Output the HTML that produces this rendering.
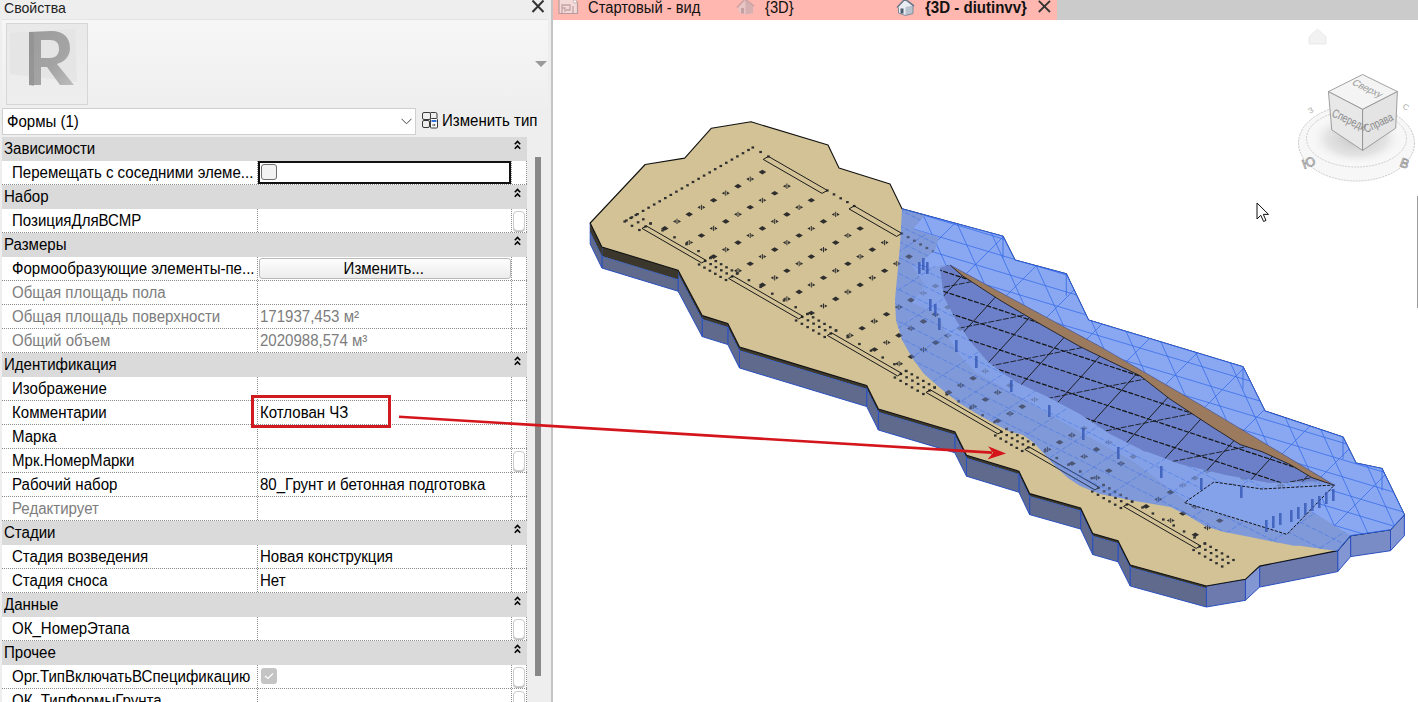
<!DOCTYPE html>
<html><head><meta charset="utf-8">
<style>
*{box-sizing:border-box;margin:0;padding:0}
html,body{width:1418px;height:702px;overflow:hidden;background:#fff;font-family:"Liberation Sans",sans-serif;font-size:16px;color:#000}
.sx{transform:scaleX(0.94);transform-origin:0 0}
#lp{position:absolute;left:0;top:0;width:551px;height:702px;background:#eeeeee}
#sep{position:absolute;left:551px;top:0;width:2px;height:702px;background:#c4c4c4}
.title{position:absolute;left:4px;top:-2px;font-size:15px;color:#222;line-height:20px}
.xcl{position:absolute;left:531px;top:0px;width:14px;height:13px}
#prev{position:absolute;left:2px;top:19px;width:546px;height:88px;background:linear-gradient(#f6f6f6,#efefef);border-top:1px solid #e4e4e4}
#ibox{position:absolute;left:6px;top:23px;width:82px;height:82px;border:1px solid #d6d6d6;background:#ececec}
.parr{position:absolute;left:535px;top:61px;width:0;height:0;border-left:6px solid transparent;border-right:6px solid transparent;border-top:6px solid #9a9a9a}
#dd{position:absolute;left:2px;top:108px;width:414px;height:27px;background:#fff;border:1px solid #cfcfcf}
#dd span{position:absolute;left:4px;top:4px;line-height:17px}
#ctype{position:absolute;left:442px;top:112px;line-height:17px}
.hd{position:absolute;left:2px;width:525px;height:24px;background:#dadada}
.ht{position:absolute;left:2px;top:3px;line-height:17px}
.chev{position:absolute;left:512px;top:3px;width:7px;height:10px}
.rw{position:absolute;left:2px;width:525px;height:24px;background:#fff}
.rw:after{content:"";position:absolute;left:0;right:0;bottom:0;height:1px;background:repeating-linear-gradient(90deg,#8c8c8c 0 1px,transparent 1px 2px)}
.vd{position:absolute;top:161px;width:1px;height:541px;background:repeating-linear-gradient(180deg,#8c8c8c 0 1px,transparent 1px 2px)}
.lt{position:absolute;left:10px;top:3px;line-height:17px;white-space:nowrap}
.vt{position:absolute;left:258px;top:3px;line-height:17px;white-space:nowrap}
.g .lt,.g .vt{color:#7d7d7d}
.focus{position:absolute;left:258px;width:253px;height:23px;border:2px solid #111}
.cb{position:absolute;left:261px;width:16px;height:16px;border:1px solid #6e6e6e;border-radius:3px;background:#f2f2f2}
.cb2{position:absolute;left:261px;width:16px;height:16px;border-radius:3px;background:#c4c4c4}
.cb2 svg{position:absolute;left:3px;top:4px}
.sbox{position:absolute;left:513px;width:12px;height:20px;border:1px solid #cdcdcd;border-radius:4px;background:#fff;box-shadow:0 1px 0 #bdbdbd}
.ebtn{position:absolute;left:259px;width:252px;height:21px;border:1px solid #b9b9b9;border-radius:3px;background:linear-gradient(#fdfdfd,#ececec);font-style:normal;text-align:center;line-height:19px;padding-right:3px}
#vline{position:absolute;left:513px;top:161px;width:1px;height:541px}
#sbthumb{position:absolute;left:535px;top:157px;width:6px;height:519px;background:#888}
#tabs{position:absolute;left:553px;top:0;width:865px;height:20px;background:#cbcbcb}
#tabpink{position:absolute;left:553px;top:0;width:504px;height:20px;background:#ffb7b0}
.tt{position:absolute;top:0;line-height:17px;white-space:nowrap;color:#111}
#canvas{position:absolute;left:553px;top:20px;width:865px;height:682px;background:#fff}
</style></head><body>
<div id="lp">
<div class="title sx">Свойства</div>
<svg class="xcl" viewBox="0 0 14 13"><path d="M1.5 0.5 L12.5 12 M12.5 0.5 L1.5 12" stroke="#333" stroke-width="2" fill="none"/></svg>
<div id="prev"></div>
<div id="ibox">
<svg width="80" height="80" viewBox="0 0 80 80" style="position:absolute;left:0;top:0">
<defs><linearGradient id="rg" x1="0" y1="0" x2="1" y2="1"><stop offset="0" stop-color="#9c9c9c"/><stop offset="0.6" stop-color="#a4a4a4"/><stop offset="1" stop-color="#bdbdbd"/></linearGradient>
<linearGradient id="bg2" x1="0" y1="0" x2="0" y2="1"><stop offset="0" stop-color="#e9e9e9"/><stop offset="1" stop-color="#eeeeee"/></linearGradient></defs>
<rect x="0" y="0" width="80" height="80" fill="url(#bg2)"/>
<path d="M3 9 L68 5 L70 58 L3 50 Z" fill="#e2e2e2" opacity="0.7"/>
<path d="M22 8 L44 7 C57 7 63 14 63 24 C63 33 57 38 50 40 L67 61 L53 61 L40 43 L34 43 L34 61 L22 61 Z M34 16 L34 34 L43 34 C49 34 52 30 52 25 C52 19 49 16 43 16 Z" fill="url(#rg)" fill-rule="evenodd"/>
<path d="M22 8 L22 61 L27 62 L27 9 Z" fill="#8e8e8e" opacity="0.6"/>
</svg>
</div>
<i class="parr"></i>
<div id="dd"><span class="sx">Формы (1)</span>
<svg style="position:absolute;left:398px;top:9px" width="11" height="7" viewBox="0 0 11 7"><path d="M0.5 0.8 L5.5 5.8 L10.5 0.8" stroke="#444" stroke-width="1" fill="none"/></svg></div>
<svg style="position:absolute;left:421px;top:111px" width="18" height="18" viewBox="0 0 18 18"><g fill="none" stroke="#3a3a3a" stroke-width="1"><rect x="1.5" y="1.5" width="8" height="7" rx="1.5"/><rect x="1.5" y="9.5" width="7" height="7" rx="1.5"/><path d="M9.5 1.5 h5 a1.5 1.5 0 0 1 1.5 1.5 v4"/><rect x="9.5" y="7.5" width="7" height="9.5" rx="1" fill="#fff"/></g><rect x="10.5" y="9" width="5" height="2" fill="#2f6fd6"/><path d="M11 14h3M13 12.8l1.2 1.2-1.2 1.2" stroke="#3a3a3a" stroke-width="0.8" fill="none"/></svg>
<div id="ctype" class="sx" style="position:absolute">Изменить тип</div>
<div class="rw" style="top:161px"><span class="lt sx">Перемещать с соседними элеме...</span><span class="vt sx"></span></div>
<div class="rw" style="top:209px"><span class="lt sx">ПозицияДляВСМР</span><span class="vt sx"></span></div>
<div class="rw" style="top:257px"><span class="lt sx">Формообразующие элементы-пе...</span><span class="vt sx"></span></div>
<div class="rw g" style="top:281px"><span class="lt sx">Общая площадь пола</span><span class="vt sx"></span></div>
<div class="rw g" style="top:305px"><span class="lt sx">Общая площадь поверхности</span><span class="vt sx">171937,453 м²</span></div>
<div class="rw g" style="top:329px"><span class="lt sx">Общий объем</span><span class="vt sx">2020988,574 м³</span></div>
<div class="rw" style="top:377px"><span class="lt sx">Изображение</span><span class="vt sx"></span></div>
<div class="rw" style="top:401px"><span class="lt sx">Комментарии</span><span class="vt sx">Котлован ЧЗ</span></div>
<div class="rw" style="top:425px"><span class="lt sx">Марка</span><span class="vt sx"></span></div>
<div class="rw" style="top:449px"><span class="lt sx">Мрк.НомерМарки</span><span class="vt sx"></span></div>
<div class="rw" style="top:473px"><span class="lt sx">Рабочий набор</span><span class="vt sx">80_Грунт и бетонная подготовка</span></div>
<div class="rw g" style="top:497px"><span class="lt sx">Редактирует</span><span class="vt sx"></span></div>
<div class="rw" style="top:545px"><span class="lt sx">Стадия возведения</span><span class="vt sx">Новая конструкция</span></div>
<div class="rw" style="top:569px"><span class="lt sx">Стадия сноса</span><span class="vt sx">Нет</span></div>
<div class="rw" style="top:617px"><span class="lt sx">ОК_НомерЭтапа</span><span class="vt sx"></span></div>
<div class="rw" style="top:665px"><span class="lt sx">Орг.ТипВключатьВСпецификацию</span><span class="vt sx"></span></div>
<div class="rw" style="top:689px"><span class="lt sx">ОК_ТипФормыГрунта</span><span class="vt sx"></span></div>
<i class="vd" style="left:257px"></i><i class="vd" style="left:511px"></i><i class="vd" style="left:526px"></i>
<div class="hd" style="top:137px"><span class="ht sx">Зависимости</span><svg class="chev" viewBox="0 0 7 10"><path d="M0.8 4.2 L3.5 1.5 L6.2 4.2 M0.8 8.7 L3.5 6 L6.2 8.7" stroke="#000" stroke-width="1.6" fill="none"/></svg></div>
<div class="hd" style="top:185px"><span class="ht sx">Набор</span><svg class="chev" viewBox="0 0 7 10"><path d="M0.8 4.2 L3.5 1.5 L6.2 4.2 M0.8 8.7 L3.5 6 L6.2 8.7" stroke="#000" stroke-width="1.6" fill="none"/></svg></div>
<div class="hd" style="top:233px"><span class="ht sx">Размеры</span><svg class="chev" viewBox="0 0 7 10"><path d="M0.8 4.2 L3.5 1.5 L6.2 4.2 M0.8 8.7 L3.5 6 L6.2 8.7" stroke="#000" stroke-width="1.6" fill="none"/></svg></div>
<div class="hd" style="top:353px"><span class="ht sx">Идентификация</span><svg class="chev" viewBox="0 0 7 10"><path d="M0.8 4.2 L3.5 1.5 L6.2 4.2 M0.8 8.7 L3.5 6 L6.2 8.7" stroke="#000" stroke-width="1.6" fill="none"/></svg></div>
<div class="hd" style="top:521px"><span class="ht sx">Стадии</span><svg class="chev" viewBox="0 0 7 10"><path d="M0.8 4.2 L3.5 1.5 L6.2 4.2 M0.8 8.7 L3.5 6 L6.2 8.7" stroke="#000" stroke-width="1.6" fill="none"/></svg></div>
<div class="hd" style="top:593px"><span class="ht sx">Данные</span><svg class="chev" viewBox="0 0 7 10"><path d="M0.8 4.2 L3.5 1.5 L6.2 4.2 M0.8 8.7 L3.5 6 L6.2 8.7" stroke="#000" stroke-width="1.6" fill="none"/></svg></div>
<div class="hd" style="top:641px"><span class="ht sx">Прочее</span><svg class="chev" viewBox="0 0 7 10"><path d="M0.8 4.2 L3.5 1.5 L6.2 4.2 M0.8 8.7 L3.5 6 L6.2 8.7" stroke="#000" stroke-width="1.6" fill="none"/></svg></div>
<i class="focus" style="top:161px"></i><i class="cb" style="top:164px"></i>
<i class="sbox" style="top:211px"></i>
<i class="ebtn" style="top:258px"><span style="display:inline-block;transform:scaleX(0.94)">Изменить...</span></i>






<i class="sbox" style="top:451px"></i>




<i class="sbox" style="top:619px"></i>
<i class="cb2" style="top:668px"><svg width="10" height="8" viewBox="0 0 10 8"><path d="M1 4 L4 6.5 L9 1.5" stroke="#fff" stroke-width="1.2" fill="none"/></svg></i><i class="sbox" style="top:667px"></i>
<i class="sbox" style="top:691px"></i>
<div id="sbthumb"></div>
</div>
<div id="sep"></div>
<div id="tabs"></div><div id="tabpink"></div>
<svg style="position:absolute;left:558px;top:0" width="21" height="15" viewBox="0 0 21 15">
<path d="M1 -1 V13.5 H19.5 V3 L16.5 -1" fill="#f3d9d8" stroke="#b99a9a" stroke-width="1.2"/>
<path d="M4 13 V5 H12 V10 H8 M4 8 H7 V12 M15 6 V13" fill="none" stroke="#c2a3a3" stroke-width="1.3"/>
<circle cx="17" cy="1.5" r="1.6" fill="#fff" stroke="#c2a3a3" stroke-width="0.8"/>
</svg>
<div class="tt sx" style="left:588px;top:-1px;transform:scaleX(0.92)">Стартовый - вид</div>
<svg style="position:absolute;left:736px;top:0" width="19" height="15" viewBox="0 0 19 15">
<path d="M2.5 7 L9 -0.5 L17 5.5 V13 L9.5 14.5 L2.5 12.5 Z" fill="#e8c4c4"/>
<path d="M9 -0.5 L17 5.5 V13 L9.5 14.5 V7 Z" fill="#d6b0b0"/>
<path d="M1 7.5 L9 -1 L18 6" fill="none" stroke="#c9a1a1" stroke-width="1.4"/>
<rect x="5" y="8" width="3" height="5.5" fill="#c5a0a0"/>
</svg>
<div class="tt sx" style="left:765px;top:-1px;transform:scaleX(0.92)">{3D}</div>
<svg style="position:absolute;left:896px;top:0" width="19" height="16" viewBox="0 0 19 16">
<path d="M2.5 7 L9 -0.5 L17 5.5 V13.5 L9.5 15.5 L2.5 13 Z" fill="#e9edf3"/>
<path d="M9.5 7 L17 5.5 V13.5 L9.5 15.5 Z" fill="#b9c2cf"/>
<path d="M1 7.5 L9 -1 L18 6" fill="none" stroke="#6d7a8c" stroke-width="1.6"/>
<path d="M2.5 7.5 V13 L9.5 15.5 L17 13.5 V6" fill="none" stroke="#7f8a99" stroke-width="1"/>
<rect x="4.5" y="8.5" width="3" height="5" fill="#4f5d70"/>
</svg>
<div class="tt sx" style="left:925px;top:-1px;font-weight:bold">{3D - diutinvv}</div>
<svg style="position:absolute;left:1038px;top:0" width="13" height="13" viewBox="0 0 13 13"><path d="M0.8 0.8 L12 12 M12 0.8 L0.8 12" stroke="#333" stroke-width="1.8"/></svg>
<svg style="position:absolute;left:1290px;top:20px" width="128" height="200" viewBox="1290 20 128 200">
<defs>
<radialGradient id="shd" cx="0.5" cy="0.5" r="0.5"><stop offset="0" stop-color="#c8c8c8"/><stop offset="0.6" stop-color="#e4e4e4"/><stop offset="1" stop-color="#fff" stop-opacity="0"/></radialGradient>
</defs>
<path d="M1309 37 L1317.5 29 L1326 37 V44 H1309 Z" fill="#f2f2f2" stroke="#e6e6e6" stroke-width="0.8"/>
<ellipse cx="1356.5" cy="143" rx="58" ry="38" fill="#f7f7f7" stroke="#c8c8c8" stroke-width="1" stroke-dasharray="2 1"/>
<ellipse cx="1356.5" cy="138.5" rx="50" ry="28.5" fill="url(#shd)" stroke="#cfcfcf" stroke-width="1" stroke-dasharray="2 1"/>
<path d="M1300.5 143.5 A56 36.5 0 0 0 1412.5 143.5 A56 36.5 0 0 1 1300.5 143.5" fill="none"/>

<polygon points="1328.4,91.6 1362.6,74.5 1397.4,91.6 1362.6,109.4" fill="#f4f4f4" stroke="#8a8a8a" stroke-width="0.8"/>
<polygon points="1328.4,91.6 1362.6,109.4 1362.6,150.4 1331.8,129.9" fill="#e8e8e8" stroke="#8a8a8a" stroke-width="0.8"/>
<polygon points="1362.6,109.4 1397.4,91.6 1395.7,128.2 1362.6,150.4" fill="#e4e4e4" stroke="#8a8a8a" stroke-width="0.8"/>
<text x="0" y="0" font-family="Liberation Sans" font-size="9.5" fill="#9a9a9a" transform="translate(1351,84) rotate(26) skewX(-20)">Сверху</text>
<text x="0" y="0" font-family="Liberation Sans" font-size="10" fill="#8a8a8a" transform="translate(1331,116) rotate(25) scale(0.9,1.2)">Спереди</text>
<text x="0" y="0" font-family="Liberation Sans" font-size="10" fill="#8a8a8a" transform="translate(1366,133) rotate(-25) scale(0.9,1.2)">Справа</text>
<text x="0" y="0" font-family="Liberation Sans" font-size="13" fill="none" stroke="#999" stroke-width="0.8" transform="translate(1304,169) rotate(-20)">Ю</text>
<text x="0" y="0" font-family="Liberation Sans" font-size="13" fill="none" stroke="#999" stroke-width="0.8" transform="translate(1399,166) rotate(20)">В</text>
<text x="0" y="0" font-family="Liberation Sans" font-size="8" fill="#aaa" transform="translate(1310,114) rotate(-30)">З</text>
<text x="0" y="0" font-family="Liberation Sans" font-size="8" fill="#aaa" transform="translate(1402,108) rotate(30)">С</text>
</svg>
<svg style="position:absolute;left:1256px;top:202px" width="14" height="21" viewBox="0 0 14 21"><path d="M1 1 V17 L4.8 13.3 L7.6 19.5 L10 18.4 L7.3 12.4 H12.5 Z" fill="#fff" stroke="#111" stroke-width="1"/></svg>
<div style="position:absolute;left:1417px;top:196px;width:1px;height:112px;background:#9c9c9c"></div>
<svg id="model" width="1418" height="702" viewBox="0 0 1418 702" style="position:absolute;left:0;top:0">
<polygon points="1404.4,514.7 1390.5,529.7 1390.5,550.7 1404.4,535.7" fill="#8196d2" stroke="#2a4fc0" stroke-width="1"/>
<polygon points="1390.5,529.7 1350.6,535.6 1350.6,556.6 1390.5,550.7" fill="#7a8cc6" stroke="#2a4fc0" stroke-width="1"/>
<polygon points="1350.6,535.6 1337.7,550.6 1337.7,571.6 1350.6,556.6" fill="#8196d2" stroke="#2a4fc0" stroke-width="1"/>
<polygon points="1337.7,550.6 1259.6,566.1 1259.6,587.1 1337.7,571.6" fill="#6c7aae" stroke="#2a4fc0" stroke-width="1"/>
<polygon points="1259.6,566.1 1245.4,579.3 1245.4,600.3 1259.6,587.1" fill="#8196d2" stroke="#2a4fc0" stroke-width="1"/>
<polygon points="1245.4,579.3 1206.4,586.0 1206.4,607.0 1245.4,600.3" fill="#6c7aae" stroke="#2a4fc0" stroke-width="1"/>
<polygon points="1206.4,586.0 1130.2,565.0 1130.2,586.0 1206.4,607.0" fill="#5f6a8c" stroke="#2a4fc0" stroke-width="1"/>
<polygon points="1206.4,586.0 1130.2,565.0 1130.2,567.1 1206.4,588.1" fill="#3c372c"/>
<line x1="1206.4" y1="588.6" x2="1130.2" y2="567.6" stroke="#3566dc" stroke-width="1" stroke-dasharray="2 1.5"/>
<polygon points="1130.2,565.0 1118.0,540.8 1118.0,561.8 1130.2,586.0" fill="#5f6a8c" stroke="#2a4fc0" stroke-width="1"/>
<polygon points="1130.2,565.0 1118.0,540.8 1118.0,543.1 1130.2,567.3" fill="#3c372c"/>
<line x1="1130.2" y1="567.8" x2="1118" y2="543.6" stroke="#3566dc" stroke-width="1" stroke-dasharray="2 1.5"/>
<polygon points="1118.0,540.8 1092.7,533.5 1092.7,554.5 1118.0,561.8" fill="#5f6a8c" stroke="#2a4fc0" stroke-width="1"/>
<polygon points="1118.0,540.8 1092.7,533.5 1092.7,535.8 1118.0,543.1" fill="#3c372c"/>
<line x1="1118" y1="543.6" x2="1092.7" y2="536.3" stroke="#3566dc" stroke-width="1" stroke-dasharray="2 1.5"/>
<polygon points="1092.7,533.5 1080.6,508.0 1080.6,529.0 1092.7,554.5" fill="#5f6a8c" stroke="#2a4fc0" stroke-width="1"/>
<polygon points="1092.7,533.5 1080.6,508.0 1080.6,510.4 1092.7,535.9" fill="#3c372c"/>
<line x1="1092.7" y1="536.4" x2="1080.6" y2="510.9" stroke="#3566dc" stroke-width="1" stroke-dasharray="2 1.5"/>
<polygon points="1080.6,508.0 1029.6,493.6 1029.6,514.6 1080.6,529.0" fill="#5f6a8c" stroke="#2a4fc0" stroke-width="1"/>
<polygon points="1080.6,508.0 1029.6,493.6 1029.6,496.1 1080.6,510.5" fill="#3c372c"/>
<line x1="1080.6" y1="511.0" x2="1029.6" y2="496.6" stroke="#3566dc" stroke-width="1" stroke-dasharray="2 1.5"/>
<polygon points="1029.6,493.6 1018.9,471.2 1018.9,492.2 1029.6,514.6" fill="#5f6a8c" stroke="#2a4fc0" stroke-width="1"/>
<polygon points="1029.6,493.6 1018.9,471.2 1018.9,473.8 1029.6,496.2" fill="#3c372c"/>
<line x1="1029.6" y1="496.7" x2="1018.9" y2="474.3" stroke="#3566dc" stroke-width="1" stroke-dasharray="2 1.5"/>
<polygon points="1018.9,471.2 966.5,455.2 966.5,476.2 1018.9,492.2" fill="#5f6a8c" stroke="#2a4fc0" stroke-width="1"/>
<polygon points="1018.9,471.2 966.5,455.2 966.5,457.9 1018.9,473.9" fill="#3c372c"/>
<line x1="1018.9" y1="474.4" x2="966.5" y2="458.4" stroke="#3566dc" stroke-width="1" stroke-dasharray="2 1.5"/>
<polygon points="966.5,455.2 954.8,431.7 954.8,452.7 966.5,476.2" fill="#5f6a8c" stroke="#2a4fc0" stroke-width="1"/>
<polygon points="966.5,455.2 954.8,431.7 954.8,434.5 966.5,458.0" fill="#3c372c"/>
<line x1="966.5" y1="458.5" x2="954.8" y2="435.0" stroke="#3566dc" stroke-width="1" stroke-dasharray="2 1.5"/>
<polygon points="954.8,431.7 878.4,409.0 878.4,430.0 954.8,452.7" fill="#5f6a8c" stroke="#2a4fc0" stroke-width="1"/>
<polygon points="954.8,431.7 878.4,409.0 878.4,411.9 954.8,434.6" fill="#3c372c"/>
<line x1="954.8" y1="435.1" x2="878.4" y2="412.4" stroke="#3566dc" stroke-width="1" stroke-dasharray="2 1.5"/>
<polygon points="878.4,409.0 866.7,385.5 866.7,406.5 878.4,430.0" fill="#5f6a8c" stroke="#2a4fc0" stroke-width="1"/>
<polygon points="878.4,409.0 866.7,385.5 866.7,388.5 878.4,412.0" fill="#3c372c"/>
<line x1="878.4" y1="412.5" x2="866.7" y2="389.0" stroke="#3566dc" stroke-width="1" stroke-dasharray="2 1.5"/>
<polygon points="866.7,385.5 739.5,347.0 739.5,368.0 866.7,406.5" fill="#5f6a8c" stroke="#2a4fc0" stroke-width="1"/>
<polygon points="866.7,385.5 739.5,347.0 739.5,350.2 866.7,388.7" fill="#3c372c"/>
<line x1="866.7" y1="389.2" x2="739.5" y2="350.7" stroke="#3566dc" stroke-width="1" stroke-dasharray="2 1.5"/>
<polygon points="739.5,347.0 727.8,323.5 727.8,344.5 739.5,368.0" fill="#5f6a8c" stroke="#2a4fc0" stroke-width="1"/>
<polygon points="739.5,347.0 727.8,323.5 727.8,327.0 739.5,350.5" fill="#3c372c"/>
<line x1="739.5" y1="351.0" x2="727.8" y2="327.5" stroke="#3566dc" stroke-width="1" stroke-dasharray="2 1.5"/>
<polygon points="727.8,323.5 702.2,315.6 702.2,336.6 727.8,344.5" fill="#5f6a8c" stroke="#2a4fc0" stroke-width="1"/>
<polygon points="727.8,323.5 702.2,315.6 702.2,319.1 727.8,327.0" fill="#3c372c"/>
<line x1="727.8" y1="327.5" x2="702.2" y2="319.6" stroke="#3566dc" stroke-width="1" stroke-dasharray="2 1.5"/>
<polygon points="702.2,315.6 678.1,270.2 678.1,291.2 702.2,336.6" fill="#5f6a8c" stroke="#2a4fc0" stroke-width="1"/>
<polygon points="702.2,315.6 678.1,270.2 678.1,273.8 702.2,319.2" fill="#3c372c"/>
<line x1="702.2" y1="319.7" x2="678.1" y2="274.3" stroke="#3566dc" stroke-width="1" stroke-dasharray="2 1.5"/>
<polygon points="678.1,270.2 601.9,247.0 601.9,268.0 678.1,291.2" fill="#5f6a8c" stroke="#2a4fc0" stroke-width="1"/>
<polygon points="678.1,270.2 601.9,247.0 601.9,256.0 678.1,279.2" fill="#3c372c"/>
<line x1="678.1" y1="279.7" x2="601.9" y2="256.5" stroke="#3566dc" stroke-width="1" stroke-dasharray="2 1.5"/>
<polygon points="601.9,247.0 590.2,223.0 590.2,244.0 601.9,268.0" fill="#5f6a8c" stroke="#2a4fc0" stroke-width="1"/>
<polygon points="601.9,247.0 590.2,223.0 590.2,232.0 601.9,256.0" fill="#3c372c"/>
<line x1="601.9" y1="256.5" x2="590.2" y2="232.5" stroke="#3566dc" stroke-width="1" stroke-dasharray="2 1.5"/>
<polygon points="590.2,223.0 645.2,164.5 684.7,158.1 711.4,128.2 751.0,121.8 828.0,145.0 839.0,168.0 890.0,184.0 902.0,208.8 1003.0,236.2 1015.0,260.0 1066.3,273.8 1088.5,320.0 1243.0,366.7 1265.0,411.0 1343.0,437.0 1356.0,463.0 1382.0,468.5 1404.4,514.7 1390.5,529.7 1350.6,535.6 1337.7,550.6 1259.6,566.1 1245.4,579.3 1206.4,586.0 1130.2,565.0 1118.0,540.8 1092.7,533.5 1080.6,508.0 1029.6,493.6 1018.9,471.2 966.5,455.2 954.8,431.7 878.4,409.0 866.7,385.5 739.5,347.0 727.8,323.5 702.2,315.6 678.1,270.2 601.9,247.0 590.2,223.0" fill="#d2c295" stroke="#111" stroke-width="1.1" stroke-linejoin="round"/>
<g fill="#2e2e2e"><rect x="625.1" y="219.4" width="2.6" height="2.2"/><rect x="630.7" y="216.2" width="2.6" height="2.2"/><rect x="636.2" y="213.0" width="2.6" height="2.2"/><rect x="641.8" y="209.8" width="2.6" height="2.2"/><rect x="647.3" y="206.6" width="2.6" height="2.2"/><rect x="652.9" y="203.4" width="2.6" height="2.2"/><rect x="658.4" y="200.2" width="2.6" height="2.2"/><rect x="664.0" y="197.0" width="2.6" height="2.2"/><rect x="669.5" y="193.8" width="2.6" height="2.2"/><rect x="675.1" y="190.6" width="2.6" height="2.2"/><rect x="680.6" y="187.4" width="2.6" height="2.2"/><rect x="686.2" y="184.2" width="2.6" height="2.2"/><rect x="691.7" y="180.9" width="2.6" height="2.2"/><rect x="697.3" y="177.7" width="2.6" height="2.2"/><rect x="702.8" y="174.5" width="2.6" height="2.2"/><rect x="708.4" y="171.3" width="2.6" height="2.2"/><rect x="713.9" y="168.1" width="2.6" height="2.2"/><rect x="719.5" y="164.9" width="2.6" height="2.2"/><rect x="725.0" y="161.7" width="2.6" height="2.2"/><rect x="730.6" y="158.5" width="2.6" height="2.2"/><rect x="736.1" y="155.3" width="2.6" height="2.2"/><rect x="741.7" y="152.1" width="2.6" height="2.2"/><rect x="747.2" y="148.9" width="2.6" height="2.2"/><rect x="751.5" y="146.4" width="2.6" height="2.2"/><rect x="759.3" y="150.9" width="2.6" height="2.2"/><rect x="767.1" y="155.4" width="2.6" height="2.2"/><rect x="826.0" y="189.4" width="2.6" height="2.2"/><rect x="832.7" y="193.3" width="2.6" height="2.2"/><rect x="839.4" y="197.2" width="2.6" height="2.2"/><rect x="846.1" y="201.0" width="2.6" height="2.2"/><rect x="852.9" y="204.9" width="2.6" height="2.2"/><rect x="900.5" y="232.4" width="2.6" height="2.2"/><rect x="906.8" y="236.0" width="2.6" height="2.2"/><rect x="913.0" y="239.7" width="2.6" height="2.2"/><rect x="919.3" y="243.3" width="2.6" height="2.2"/><rect x="925.6" y="246.9" width="2.6" height="2.2"/><rect x="931.9" y="250.5" width="2.6" height="2.2"/><rect x="938.2" y="254.2" width="2.6" height="2.2"/><rect x="944.4" y="257.8" width="2.6" height="2.2"/><rect x="950.7" y="261.4" width="2.6" height="2.2"/><rect x="1002.7" y="291.4" width="2.6" height="2.2"/><rect x="1009.5" y="295.3" width="2.6" height="2.2"/><rect x="1016.3" y="299.3" width="2.6" height="2.2"/><rect x="1023.1" y="303.2" width="2.6" height="2.2"/><rect x="1029.9" y="307.1" width="2.6" height="2.2"/><rect x="1036.7" y="311.0" width="2.6" height="2.2"/><rect x="1043.5" y="315.0" width="2.6" height="2.2"/><rect x="1050.3" y="318.9" width="2.6" height="2.2"/><rect x="1097.9" y="346.4" width="2.6" height="2.2"/><rect x="1104.3" y="350.1" width="2.6" height="2.2"/><rect x="1110.7" y="353.8" width="2.6" height="2.2"/><rect x="1117.1" y="357.5" width="2.6" height="2.2"/><rect x="1123.5" y="361.1" width="2.6" height="2.2"/><rect x="1129.9" y="364.8" width="2.6" height="2.2"/><rect x="1136.3" y="368.5" width="2.6" height="2.2"/><rect x="1142.6" y="372.2" width="2.6" height="2.2"/><rect x="1149.0" y="375.9" width="2.6" height="2.2"/><rect x="1197.5" y="403.9" width="2.6" height="2.2"/><rect x="1203.8" y="407.5" width="2.6" height="2.2"/><rect x="1210.1" y="411.1" width="2.6" height="2.2"/><rect x="1216.4" y="414.8" width="2.6" height="2.2"/><rect x="1222.6" y="418.4" width="2.6" height="2.2"/><rect x="1228.9" y="422.0" width="2.6" height="2.2"/><rect x="1235.2" y="425.6" width="2.6" height="2.2"/><rect x="1241.5" y="429.3" width="2.6" height="2.2"/><rect x="1247.8" y="432.9" width="2.6" height="2.2"/><rect x="1295.4" y="460.4" width="2.6" height="2.2"/><rect x="1302.1" y="464.3" width="2.6" height="2.2"/><rect x="1308.8" y="468.1" width="2.6" height="2.2"/><rect x="1315.5" y="472.0" width="2.6" height="2.2"/><rect x="1322.2" y="475.9" width="2.6" height="2.2"/><rect x="1328.9" y="479.8" width="2.6" height="2.2"/><rect x="1335.7" y="483.6" width="2.6" height="2.2"/><rect x="1342.4" y="487.5" width="2.6" height="2.2"/><rect x="1349.1" y="491.4" width="2.6" height="2.2"/><rect x="623.4" y="220.4" width="2.6" height="2.2"/><rect x="630.7" y="224.7" width="2.6" height="2.2"/><rect x="638.1" y="228.9" width="2.6" height="2.2"/><rect x="629.4" y="216.9" width="2.6" height="2.2"/><rect x="636.8" y="221.2" width="2.6" height="2.2"/><rect x="644.2" y="225.4" width="2.6" height="2.2"/><rect x="634.6" y="213.9" width="2.6" height="2.2"/><rect x="642.0" y="218.2" width="2.6" height="2.2"/><rect x="649.3" y="222.4" width="2.6" height="2.2"/><rect x="697.8" y="263.4" width="2.6" height="2.2"/><rect x="703.2" y="266.5" width="2.6" height="2.2"/><rect x="708.6" y="269.6" width="2.6" height="2.2"/><rect x="714.0" y="272.7" width="2.6" height="2.2"/><rect x="719.3" y="275.8" width="2.6" height="2.2"/><rect x="724.7" y="278.9" width="2.6" height="2.2"/><rect x="703.9" y="259.9" width="2.6" height="2.2"/><rect x="709.3" y="263.0" width="2.6" height="2.2"/><rect x="714.6" y="266.1" width="2.6" height="2.2"/><rect x="720.0" y="269.2" width="2.6" height="2.2"/><rect x="725.4" y="272.3" width="2.6" height="2.2"/><rect x="730.8" y="275.4" width="2.6" height="2.2"/><rect x="709.1" y="256.9" width="2.6" height="2.2"/><rect x="714.5" y="260.0" width="2.6" height="2.2"/><rect x="719.8" y="263.1" width="2.6" height="2.2"/><rect x="725.2" y="266.2" width="2.6" height="2.2"/><rect x="730.6" y="269.3" width="2.6" height="2.2"/><rect x="735.9" y="272.4" width="2.6" height="2.2"/><rect x="794.8" y="319.4" width="2.6" height="2.2"/><rect x="800.6" y="322.7" width="2.6" height="2.2"/><rect x="806.3" y="326.0" width="2.6" height="2.2"/><rect x="812.0" y="329.3" width="2.6" height="2.2"/><rect x="817.7" y="332.6" width="2.6" height="2.2"/><rect x="823.4" y="335.9" width="2.6" height="2.2"/><rect x="800.9" y="315.9" width="2.6" height="2.2"/><rect x="806.6" y="319.2" width="2.6" height="2.2"/><rect x="812.3" y="322.5" width="2.6" height="2.2"/><rect x="818.0" y="325.8" width="2.6" height="2.2"/><rect x="823.8" y="329.1" width="2.6" height="2.2"/><rect x="829.5" y="332.4" width="2.6" height="2.2"/><rect x="806.1" y="312.9" width="2.6" height="2.2"/><rect x="811.8" y="316.2" width="2.6" height="2.2"/><rect x="817.5" y="319.5" width="2.6" height="2.2"/><rect x="823.2" y="322.8" width="2.6" height="2.2"/><rect x="829.0" y="326.1" width="2.6" height="2.2"/><rect x="834.7" y="329.4" width="2.6" height="2.2"/><rect x="893.6" y="376.4" width="2.6" height="2.2"/><rect x="899.3" y="379.7" width="2.6" height="2.2"/><rect x="905.0" y="383.0" width="2.6" height="2.2"/><rect x="910.7" y="386.3" width="2.6" height="2.2"/><rect x="916.4" y="389.6" width="2.6" height="2.2"/><rect x="922.1" y="392.9" width="2.6" height="2.2"/><rect x="899.6" y="372.9" width="2.6" height="2.2"/><rect x="905.3" y="376.2" width="2.6" height="2.2"/><rect x="911.1" y="379.5" width="2.6" height="2.2"/><rect x="916.8" y="382.8" width="2.6" height="2.2"/><rect x="922.5" y="386.1" width="2.6" height="2.2"/><rect x="928.2" y="389.4" width="2.6" height="2.2"/><rect x="904.8" y="369.9" width="2.6" height="2.2"/><rect x="910.5" y="373.2" width="2.6" height="2.2"/><rect x="916.2" y="376.5" width="2.6" height="2.2"/><rect x="922.0" y="379.8" width="2.6" height="2.2"/><rect x="927.7" y="383.1" width="2.6" height="2.2"/><rect x="933.4" y="386.4" width="2.6" height="2.2"/><rect x="994.0" y="434.4" width="2.6" height="2.2"/><rect x="999.4" y="437.5" width="2.6" height="2.2"/><rect x="1004.8" y="440.6" width="2.6" height="2.2"/><rect x="1010.1" y="443.7" width="2.6" height="2.2"/><rect x="1015.5" y="446.8" width="2.6" height="2.2"/><rect x="1020.9" y="449.9" width="2.6" height="2.2"/><rect x="1000.1" y="430.9" width="2.6" height="2.2"/><rect x="1005.4" y="434.0" width="2.6" height="2.2"/><rect x="1010.8" y="437.1" width="2.6" height="2.2"/><rect x="1016.2" y="440.2" width="2.6" height="2.2"/><rect x="1021.6" y="443.3" width="2.6" height="2.2"/><rect x="1026.9" y="446.4" width="2.6" height="2.2"/><rect x="1005.3" y="427.9" width="2.6" height="2.2"/><rect x="1010.6" y="431.0" width="2.6" height="2.2"/><rect x="1016.0" y="434.1" width="2.6" height="2.2"/><rect x="1021.4" y="437.2" width="2.6" height="2.2"/><rect x="1026.8" y="440.3" width="2.6" height="2.2"/><rect x="1032.1" y="443.4" width="2.6" height="2.2"/><rect x="1091.0" y="490.4" width="2.6" height="2.2"/><rect x="1096.7" y="493.7" width="2.6" height="2.2"/><rect x="1102.4" y="497.0" width="2.6" height="2.2"/><rect x="1108.2" y="500.3" width="2.6" height="2.2"/><rect x="1113.9" y="503.6" width="2.6" height="2.2"/><rect x="1119.6" y="506.9" width="2.6" height="2.2"/><rect x="1097.1" y="486.9" width="2.6" height="2.2"/><rect x="1102.8" y="490.2" width="2.6" height="2.2"/><rect x="1108.5" y="493.5" width="2.6" height="2.2"/><rect x="1114.2" y="496.8" width="2.6" height="2.2"/><rect x="1119.9" y="500.1" width="2.6" height="2.2"/><rect x="1125.6" y="503.4" width="2.6" height="2.2"/><rect x="1102.3" y="483.9" width="2.6" height="2.2"/><rect x="1108.0" y="487.2" width="2.6" height="2.2"/><rect x="1113.7" y="490.5" width="2.6" height="2.2"/><rect x="1119.4" y="493.8" width="2.6" height="2.2"/><rect x="1125.1" y="497.1" width="2.6" height="2.2"/><rect x="1130.8" y="500.4" width="2.6" height="2.2"/><rect x="1192.3" y="548.9" width="2.6" height="2.2"/><rect x="1198.0" y="552.2" width="2.6" height="2.2"/><rect x="1203.8" y="555.5" width="2.6" height="2.2"/><rect x="1209.5" y="558.8" width="2.6" height="2.2"/><rect x="1215.2" y="562.1" width="2.6" height="2.2"/><rect x="1220.9" y="565.4" width="2.6" height="2.2"/><rect x="1198.4" y="545.4" width="2.6" height="2.2"/><rect x="1204.1" y="548.7" width="2.6" height="2.2"/><rect x="1209.8" y="552.0" width="2.6" height="2.2"/><rect x="1215.5" y="555.3" width="2.6" height="2.2"/><rect x="1221.3" y="558.6" width="2.6" height="2.2"/><rect x="1227.0" y="561.9" width="2.6" height="2.2"/><rect x="1203.6" y="542.4" width="2.6" height="2.2"/><rect x="1209.3" y="545.7" width="2.6" height="2.2"/><rect x="1215.0" y="549.0" width="2.6" height="2.2"/><rect x="1220.7" y="552.3" width="2.6" height="2.2"/><rect x="1226.5" y="555.6" width="2.6" height="2.2"/><rect x="1232.2" y="558.9" width="2.6" height="2.2"/><rect x="649.3" y="222.4" width="2.6" height="2.2"/><rect x="661.3" y="229.3" width="2.6" height="2.2"/><rect x="673.2" y="236.2" width="2.6" height="2.2"/><rect x="685.2" y="243.1" width="2.6" height="2.2"/><rect x="697.2" y="250.0" width="2.6" height="2.2"/><rect x="709.1" y="256.9" width="2.6" height="2.2"/><rect x="735.9" y="272.4" width="2.6" height="2.2"/><rect x="747.6" y="279.1" width="2.6" height="2.2"/><rect x="759.3" y="285.9" width="2.6" height="2.2"/><rect x="771.0" y="292.6" width="2.6" height="2.2"/><rect x="782.7" y="299.4" width="2.6" height="2.2"/><rect x="794.4" y="306.1" width="2.6" height="2.2"/><rect x="806.1" y="312.9" width="2.6" height="2.2"/><rect x="834.7" y="329.4" width="2.6" height="2.2"/><rect x="846.4" y="336.1" width="2.6" height="2.2"/><rect x="858.1" y="342.9" width="2.6" height="2.2"/><rect x="869.7" y="349.6" width="2.6" height="2.2"/><rect x="881.4" y="356.4" width="2.6" height="2.2"/><rect x="893.1" y="363.1" width="2.6" height="2.2"/><rect x="904.8" y="369.9" width="2.6" height="2.2"/><rect x="933.4" y="386.4" width="2.6" height="2.2"/><rect x="945.4" y="393.3" width="2.6" height="2.2"/><rect x="957.4" y="400.2" width="2.6" height="2.2"/><rect x="969.3" y="407.1" width="2.6" height="2.2"/><rect x="981.3" y="414.1" width="2.6" height="2.2"/><rect x="993.3" y="421.0" width="2.6" height="2.2"/><rect x="1005.3" y="427.9" width="2.6" height="2.2"/><rect x="1032.1" y="443.4" width="2.6" height="2.2"/><rect x="1043.8" y="450.1" width="2.6" height="2.2"/><rect x="1055.5" y="456.9" width="2.6" height="2.2"/><rect x="1067.2" y="463.6" width="2.6" height="2.2"/><rect x="1078.9" y="470.4" width="2.6" height="2.2"/><rect x="1090.6" y="477.1" width="2.6" height="2.2"/><rect x="1102.3" y="483.9" width="2.6" height="2.2"/><rect x="1130.8" y="500.4" width="2.6" height="2.2"/><rect x="1141.2" y="506.4" width="2.6" height="2.2"/><rect x="1151.6" y="512.4" width="2.6" height="2.2"/><rect x="1162.0" y="518.4" width="2.6" height="2.2"/><rect x="1172.4" y="524.4" width="2.6" height="2.2"/><rect x="1182.8" y="530.4" width="2.6" height="2.2"/><rect x="1193.2" y="536.4" width="2.6" height="2.2"/><rect x="1203.6" y="542.4" width="2.6" height="2.2"/><path d="M661.0 228.4L664.8 226.1L668.6 228.4L664.8 230.8Z"/><path d="M673.0 221.4L675.8 219.8V223.0ZM681.0 221.4L678.2 219.8V223.0ZM676.5 218.8h1v5.2h-1Z"/><path d="M685.4 214.3L689.2 212.0L693.0 214.3L689.2 216.7Z"/><path d="M697.4 207.3L700.2 205.7V208.9ZM705.4 207.3L702.6 205.7V208.9ZM700.9 204.7h1v5.2h-1Z"/><path d="M709.8 200.2L713.6 197.9L717.4 200.2L713.6 202.6Z"/><path d="M721.8 193.2L724.6 191.6V194.8ZM729.8 193.2L727.0 191.6V194.8ZM725.3 190.6h1v5.2h-1Z"/><path d="M734.2 186.2L738.0 183.8L741.8 186.2L738.0 188.5Z"/><path d="M746.2 179.1L749.0 177.5V180.7ZM754.2 179.1L751.4 177.5V180.7ZM749.7 176.5h1v5.2h-1Z"/><path d="M758.6 172.1L762.4 169.8L766.2 172.1L762.4 174.4Z"/><path d="M685.2 242.5L688.0 240.9V244.1ZM693.2 242.5L690.4 240.9V244.1ZM688.7 239.9h1v5.2h-1Z"/><path d="M697.6 235.5L701.4 233.2L705.2 235.5L701.4 237.8Z"/><path d="M709.6 228.4L712.4 226.8V230.0ZM717.6 228.4L714.8 226.8V230.0ZM713.1 225.8h1v5.2h-1Z"/><path d="M722.0 221.4L725.8 219.1L729.6 221.4L725.8 223.7Z"/><path d="M734.0 214.3L736.8 212.8V215.9ZM742.0 214.3L739.2 212.8V215.9ZM737.5 211.8h1v5.2h-1Z"/><path d="M746.4 207.3L750.2 205.0L754.0 207.3L750.2 209.6Z"/><path d="M758.4 200.2L761.2 198.7V201.8ZM766.4 200.2L763.6 198.7V201.8ZM761.9 197.7h1v5.2h-1Z"/><path d="M770.9 193.2L774.7 190.9L778.5 193.2L774.7 195.5Z"/><path d="M782.9 186.2L785.7 184.6V187.8ZM790.9 186.2L788.1 184.6V187.8ZM786.4 183.6h1v5.2h-1Z"/><path d="M709.8 256.6L713.6 254.3L717.4 256.6L713.6 258.9Z"/><path d="M721.8 249.6L724.6 248.0V251.2ZM729.8 249.6L727.0 248.0V251.2ZM725.3 247.0h1v5.2h-1Z"/><path d="M734.2 242.6L738.0 240.2L741.8 242.6L738.0 244.9Z"/><path d="M746.2 235.5L749.0 233.9V237.1ZM754.2 235.5L751.4 233.9V237.1ZM749.7 232.9h1v5.2h-1Z"/><path d="M758.6 228.4L762.4 226.1L766.2 228.4L762.4 230.8Z"/><path d="M770.7 221.4L773.5 219.8V223.0ZM778.7 221.4L775.9 219.8V223.0ZM774.2 218.8h1v5.2h-1Z"/><path d="M783.1 214.4L786.9 212.1L790.7 214.4L786.9 216.7Z"/><path d="M795.1 207.3L797.9 205.7V208.9ZM803.1 207.3L800.3 205.7V208.9ZM798.6 204.7h1v5.2h-1Z"/><path d="M807.5 200.2L811.3 197.9L815.1 200.2L811.3 202.6Z"/><path d="M734.0 270.8L736.8 269.1V272.4ZM742.0 270.8L739.2 269.1V272.4ZM737.5 268.1h1v5.2h-1Z"/><path d="M746.4 263.7L750.2 261.4L754.0 263.7L750.2 266.0Z"/><path d="M758.4 256.6L761.2 255.0V258.2ZM766.4 256.6L763.6 255.0V258.2ZM761.9 254.0h1v5.2h-1Z"/><path d="M770.9 249.6L774.7 247.3L778.5 249.6L774.7 251.9Z"/><path d="M782.9 242.6L785.7 241.0V244.2ZM790.9 242.6L788.1 241.0V244.2ZM786.4 240.0h1v5.2h-1Z"/><path d="M795.3 235.5L799.1 233.2L802.9 235.5L799.1 237.8Z"/><path d="M807.3 228.5L810.1 226.9V230.1ZM815.3 228.5L812.5 226.9V230.1ZM810.8 225.9h1v5.2h-1Z"/><path d="M819.7 221.4L823.5 219.1L827.3 221.4L823.5 223.7Z"/><path d="M831.7 214.4L834.5 212.8V216.0ZM839.7 214.4L836.9 212.8V216.0ZM835.2 211.8h1v5.2h-1Z"/><path d="M758.6 284.9L762.4 282.6L766.2 284.9L762.4 287.2Z"/><path d="M770.7 277.8L773.5 276.2V279.4ZM778.7 277.8L775.9 276.2V279.4ZM774.2 275.2h1v5.2h-1Z"/><path d="M783.1 270.8L786.9 268.4L790.7 270.8L786.9 273.1Z"/><path d="M795.1 263.7L797.9 262.1V265.3ZM803.1 263.7L800.3 262.1V265.3ZM798.6 261.1h1v5.2h-1Z"/><path d="M807.5 256.6L811.3 254.3L815.1 256.6L811.3 258.9Z"/><path d="M819.5 249.6L822.3 248.0V251.2ZM827.5 249.6L824.7 248.0V251.2ZM823.0 247.0h1v5.2h-1Z"/><path d="M831.9 242.6L835.7 240.2L839.5 242.6L835.7 244.9Z"/><path d="M843.9 235.5L846.7 233.9V237.1ZM851.9 235.5L849.1 233.9V237.1ZM847.4 232.9h1v5.2h-1Z"/><path d="M856.3 228.5L860.1 226.2L863.9 228.5L860.1 230.8Z"/><path d="M782.9 298.9L785.7 297.3V300.6ZM790.9 298.9L788.1 297.3V300.6ZM786.4 296.3h1v5.2h-1Z"/><path d="M795.3 291.9L799.1 289.6L802.9 291.9L799.1 294.2Z"/><path d="M807.3 284.9L810.1 283.2V286.5ZM815.3 284.9L812.5 283.2V286.5ZM810.8 282.2h1v5.2h-1Z"/><path d="M819.7 277.8L823.5 275.5L827.3 277.8L823.5 280.1Z"/><path d="M831.7 270.8L834.5 269.1V272.4ZM839.7 270.8L836.9 269.1V272.4ZM835.2 268.1h1v5.2h-1Z"/><path d="M844.1 263.7L847.9 261.4L851.7 263.7L847.9 266.0Z"/><path d="M856.1 256.6L858.9 255.0V258.2ZM864.1 256.6L861.3 255.0V258.2ZM859.6 254.0h1v5.2h-1Z"/><path d="M868.5 249.6L872.3 247.3L876.1 249.6L872.3 251.9Z"/><path d="M880.6 242.6L883.4 241.0V244.2ZM888.6 242.6L885.8 241.0V244.2ZM884.1 240.0h1v5.2h-1Z"/><path d="M807.5 313.0L811.3 310.7L815.1 313.0L811.3 315.3Z"/><path d="M819.5 306.0L822.3 304.4V307.6ZM827.5 306.0L824.7 304.4V307.6ZM823.0 303.4h1v5.2h-1Z"/><path d="M831.9 298.9L835.7 296.6L839.5 298.9L835.7 301.2Z"/><path d="M843.9 291.9L846.7 290.3V293.5ZM851.9 291.9L849.1 290.3V293.5ZM847.4 289.3h1v5.2h-1Z"/><path d="M856.3 284.9L860.1 282.6L863.9 284.9L860.1 287.2Z"/><path d="M868.3 277.8L871.1 276.2V279.4ZM876.3 277.8L873.5 276.2V279.4ZM871.8 275.2h1v5.2h-1Z"/><path d="M880.8 270.8L884.6 268.4L888.4 270.8L884.6 273.1Z"/><path d="M892.8 263.7L895.6 262.1V265.3ZM900.8 263.7L898.0 262.1V265.3ZM896.3 261.1h1v5.2h-1Z"/><path d="M905.2 256.6L909.0 254.3L912.8 256.6L909.0 258.9Z"/><path d="M845.9 335.4L848.7 333.8V337.0ZM853.9 335.4L851.1 333.8V337.0ZM849.4 332.8h1v5.2h-1Z"/><path d="M858.3 328.3L862.1 326.0L865.9 328.3L862.1 330.6Z"/><path d="M870.3 321.2L873.1 319.6V322.9ZM878.3 321.2L875.5 319.6V322.9ZM873.8 318.6h1v5.2h-1Z"/><path d="M882.7 314.2L886.5 311.9L890.3 314.2L886.5 316.5Z"/><path d="M894.8 307.1L897.6 305.5V308.8ZM902.8 307.1L900.0 305.5V308.8ZM898.3 304.5h1v5.2h-1Z"/><path d="M907.2 300.1L911.0 297.8L914.8 300.1L911.0 302.4Z"/><path d="M919.2 293.1L922.0 291.4V294.7ZM927.2 293.1L924.4 291.4V294.7ZM922.7 290.4h1v5.2h-1Z"/><path d="M931.6 286.0L935.4 283.7L939.2 286.0L935.4 288.3Z"/><path d="M943.6 279.0L946.4 277.4V280.6ZM951.6 279.0L948.8 277.4V280.6ZM947.1 276.4h1v5.2h-1Z"/><path d="M870.7 349.5L874.5 347.2L878.3 349.5L874.5 351.8Z"/><path d="M882.7 342.5L885.5 340.9V344.1ZM890.7 342.5L887.9 340.9V344.1ZM886.2 339.9h1v5.2h-1Z"/><path d="M895.1 335.4L898.9 333.1L902.7 335.4L898.9 337.8Z"/><path d="M907.1 328.4L909.9 326.8V330.0ZM915.1 328.4L912.3 326.8V330.0ZM910.6 325.8h1v5.2h-1Z"/><path d="M919.6 321.4L923.4 319.1L927.2 321.4L923.4 323.7Z"/><path d="M931.6 314.3L934.4 312.7V315.9ZM939.6 314.3L936.8 312.7V315.9ZM935.1 311.7h1v5.2h-1Z"/><path d="M944.0 307.2L947.8 304.9L951.6 307.2L947.8 309.6Z"/><path d="M956.0 300.2L958.8 298.6V301.8ZM964.0 300.2L961.2 298.6V301.8ZM959.5 297.6h1v5.2h-1Z"/><path d="M968.4 293.1L972.2 290.8L976.0 293.1L972.2 295.4Z"/><path d="M895.1 363.8L897.9 362.1V365.4ZM903.1 363.8L900.3 362.1V365.4ZM898.6 361.1h1v5.2h-1Z"/><path d="M907.5 356.7L911.3 354.4L915.1 356.7L911.3 359.0Z"/><path d="M919.5 349.6L922.3 348.0V351.2ZM927.5 349.6L924.7 348.0V351.2ZM923.0 347.0h1v5.2h-1Z"/><path d="M931.9 342.6L935.7 340.3L939.5 342.6L935.7 344.9Z"/><path d="M943.9 335.6L946.7 333.9V337.2ZM951.9 335.6L949.1 333.9V337.2ZM947.4 332.9h1v5.2h-1Z"/><path d="M956.4 328.5L960.2 326.2L964.0 328.5L960.2 330.8Z"/><path d="M968.4 321.5L971.2 319.9V323.1ZM976.4 321.5L973.6 319.9V323.1ZM971.9 318.9h1v5.2h-1Z"/><path d="M980.8 314.4L984.6 312.1L988.4 314.4L984.6 316.7Z"/><path d="M992.8 307.4L995.6 305.8V309.0ZM1000.8 307.4L998.0 305.8V309.0ZM996.3 304.8h1v5.2h-1Z"/><path d="M944.8 392.4L948.6 390.1L952.4 392.4L948.6 394.7Z"/><path d="M956.8 385.3L959.6 383.7V386.9ZM964.8 385.3L962.0 383.7V386.9ZM960.3 382.7h1v5.2h-1Z"/><path d="M969.3 378.2L973.1 375.9L976.9 378.2L973.1 380.6Z"/><path d="M981.3 371.2L984.1 369.6V372.8ZM989.3 371.2L986.5 369.6V372.8ZM984.8 368.6h1v5.2h-1Z"/><path d="M993.7 364.1L997.5 361.8L1001.3 364.1L997.5 366.4Z"/><path d="M1005.7 357.1L1008.5 355.5V358.7ZM1013.7 357.1L1010.9 355.5V358.7ZM1009.2 354.5h1v5.2h-1Z"/><path d="M1018.1 350.1L1021.9 347.8L1025.7 350.1L1021.9 352.4Z"/><path d="M1030.1 343.0L1032.9 341.4V344.6ZM1038.1 343.0L1035.3 341.4V344.6ZM1033.6 340.4h1v5.2h-1Z"/><path d="M1042.5 336.0L1046.3 333.7L1050.1 336.0L1046.3 338.3Z"/><path d="M969.2 406.5L972.0 404.9V408.1ZM977.2 406.5L974.4 404.9V408.1ZM972.7 403.9h1v5.2h-1Z"/><path d="M981.6 399.5L985.4 397.2L989.2 399.5L985.4 401.8Z"/><path d="M993.7 392.4L996.5 390.8V394.1ZM1001.7 392.4L998.9 390.8V394.1ZM997.2 389.8h1v5.2h-1Z"/><path d="M1006.1 385.4L1009.9 383.1L1013.7 385.4L1009.9 387.7Z"/><path d="M1018.1 378.4L1020.9 376.8V380.0ZM1026.1 378.4L1023.3 376.8V380.0ZM1021.6 375.8h1v5.2h-1Z"/><path d="M1030.5 371.3L1034.3 369.0L1038.1 371.3L1034.3 373.6Z"/><path d="M1042.5 364.2L1045.3 362.6V365.9ZM1050.5 364.2L1047.7 362.6V365.9ZM1046.0 361.6h1v5.2h-1Z"/><path d="M1054.9 357.2L1058.7 354.9L1062.5 357.2L1058.7 359.5Z"/><path d="M1066.9 350.1L1069.7 348.5V351.8ZM1074.9 350.1L1072.1 348.5V351.8ZM1070.4 347.5h1v5.2h-1Z"/><path d="M994.0 420.8L997.8 418.4L1001.6 420.8L997.8 423.1Z"/><path d="M1006.0 413.7L1008.8 412.1V415.3ZM1014.0 413.7L1011.2 412.1V415.3ZM1009.5 411.1h1v5.2h-1Z"/><path d="M1018.4 406.6L1022.2 404.3L1026.0 406.6L1022.2 408.9Z"/><path d="M1030.5 399.6L1033.3 398.0V401.2ZM1038.5 399.6L1035.7 398.0V401.2ZM1034.0 397.0h1v5.2h-1Z"/><path d="M1042.9 392.6L1046.7 390.2L1050.5 392.6L1046.7 394.9Z"/><path d="M1054.9 385.5L1057.7 383.9V387.1ZM1062.9 385.5L1060.1 383.9V387.1ZM1058.4 382.9h1v5.2h-1Z"/><path d="M1067.3 378.5L1071.1 376.2L1074.9 378.5L1071.1 380.8Z"/><path d="M1079.3 371.4L1082.1 369.8V373.0ZM1087.3 371.4L1084.5 369.8V373.0ZM1082.8 368.8h1v5.2h-1Z"/><path d="M1091.7 364.4L1095.5 362.1L1099.3 364.4L1095.5 366.7Z"/><path d="M1043.4 449.4L1046.2 447.8V451.0ZM1051.4 449.4L1048.6 447.8V451.0ZM1046.9 446.8h1v5.2h-1Z"/><path d="M1055.8 442.3L1059.6 440.0L1063.4 442.3L1059.6 444.6Z"/><path d="M1067.8 435.2L1070.6 433.6V436.9ZM1075.8 435.2L1073.0 433.6V436.9ZM1071.3 432.6h1v5.2h-1Z"/><path d="M1080.2 428.2L1084.0 425.9L1087.8 428.2L1084.0 430.5Z"/><path d="M1092.2 421.1L1095.0 419.5V422.8ZM1100.2 421.1L1097.4 419.5V422.8ZM1095.7 418.5h1v5.2h-1Z"/><path d="M1104.6 414.1L1108.4 411.8L1112.2 414.1L1108.4 416.4Z"/><path d="M1116.6 407.1L1119.4 405.4V408.7ZM1124.6 407.1L1121.8 405.4V408.7ZM1120.1 404.4h1v5.2h-1Z"/><path d="M1129.0 400.0L1132.8 397.7L1136.6 400.0L1132.8 402.3Z"/><path d="M1141.0 393.0L1143.8 391.4V394.6ZM1149.0 393.0L1146.2 391.4V394.6ZM1144.5 390.4h1v5.2h-1Z"/><path d="M1068.2 463.5L1072.0 461.2L1075.8 463.5L1072.0 465.8Z"/><path d="M1080.2 456.5L1083.0 454.9V458.1ZM1088.2 456.5L1085.4 454.9V458.1ZM1083.7 453.9h1v5.2h-1Z"/><path d="M1092.6 449.4L1096.4 447.1L1100.2 449.4L1096.4 451.8Z"/><path d="M1104.6 442.4L1107.4 440.8V444.0ZM1112.6 442.4L1109.8 440.8V444.0ZM1108.1 439.8h1v5.2h-1Z"/><path d="M1117.0 435.4L1120.8 433.1L1124.6 435.4L1120.8 437.7Z"/><path d="M1129.0 428.3L1131.8 426.7V429.9ZM1137.0 428.3L1134.2 426.7V429.9ZM1132.5 425.7h1v5.2h-1Z"/><path d="M1141.4 421.2L1145.2 418.9L1149.0 421.2L1145.2 423.6Z"/><path d="M1153.4 414.2L1156.2 412.6V415.8ZM1161.4 414.2L1158.6 412.6V415.8ZM1156.9 411.6h1v5.2h-1Z"/><path d="M1165.8 407.1L1169.6 404.8L1173.4 407.1L1169.6 409.4Z"/><path d="M1092.6 477.8L1095.4 476.1V479.4ZM1100.6 477.8L1097.8 476.1V479.4ZM1096.1 475.1h1v5.2h-1Z"/><path d="M1105.0 470.7L1108.8 468.4L1112.6 470.7L1108.8 473.0Z"/><path d="M1117.0 463.6L1119.8 462.0V465.2ZM1125.0 463.6L1122.2 462.0V465.2ZM1120.5 461.0h1v5.2h-1Z"/><path d="M1129.4 456.6L1133.2 454.3L1137.0 456.6L1133.2 458.9Z"/><path d="M1141.4 449.5L1144.2 447.9V451.1ZM1149.4 449.5L1146.6 447.9V451.1ZM1144.9 446.9h1v5.2h-1Z"/><path d="M1153.8 442.5L1157.6 440.2L1161.4 442.5L1157.6 444.8Z"/><path d="M1165.8 435.4L1168.6 433.8V437.1ZM1173.8 435.4L1171.0 433.8V437.1ZM1169.3 432.8h1v5.2h-1Z"/><path d="M1178.2 428.4L1182.0 426.1L1185.8 428.4L1182.0 430.7Z"/><path d="M1190.2 421.4L1193.0 419.8V423.0ZM1198.2 421.4L1195.4 419.8V423.0ZM1193.7 418.8h1v5.2h-1Z"/><path d="M1142.3 506.4L1146.1 504.1L1149.9 506.4L1146.1 508.7Z"/><path d="M1154.3 499.3L1157.1 497.7V500.9ZM1162.3 499.3L1159.5 497.7V500.9ZM1157.8 496.7h1v5.2h-1Z"/><path d="M1166.7 492.2L1170.5 489.9L1174.3 492.2L1170.5 494.6Z"/><path d="M1178.7 485.2L1181.5 483.6V486.8ZM1186.7 485.2L1183.9 483.6V486.8ZM1182.2 482.6h1v5.2h-1Z"/><path d="M1191.1 478.1L1194.9 475.8L1198.7 478.1L1194.9 480.4Z"/><path d="M1203.1 471.1L1205.9 469.5V472.7ZM1211.1 471.1L1208.3 469.5V472.7ZM1206.6 468.5h1v5.2h-1Z"/><path d="M1215.6 464.1L1219.4 461.8L1223.2 464.1L1219.4 466.4Z"/><path d="M1227.6 457.0L1230.4 455.4V458.6ZM1235.6 457.0L1232.8 455.4V458.6ZM1231.1 454.4h1v5.2h-1Z"/><path d="M1240.0 450.0L1243.8 447.7L1247.6 450.0L1243.8 452.3Z"/><path d="M1166.7 520.5L1169.5 518.9V522.1ZM1174.7 520.5L1171.9 518.9V522.1ZM1170.2 517.9h1v5.2h-1Z"/><path d="M1179.1 513.5L1182.9 511.2L1186.7 513.5L1182.9 515.8Z"/><path d="M1191.1 506.4L1193.9 504.8V508.1ZM1199.1 506.4L1196.3 504.8V508.1ZM1194.6 503.8h1v5.2h-1Z"/><path d="M1203.5 499.4L1207.3 497.1L1211.1 499.4L1207.3 501.7Z"/><path d="M1215.5 492.4L1218.3 490.8V494.0ZM1223.5 492.4L1220.7 490.8V494.0ZM1219.0 489.8h1v5.2h-1Z"/><path d="M1227.9 485.3L1231.7 483.0L1235.5 485.3L1231.7 487.6Z"/><path d="M1239.9 478.2L1242.7 476.6V479.9ZM1247.9 478.2L1245.1 476.6V479.9ZM1243.4 475.6h1v5.2h-1Z"/><path d="M1252.4 471.2L1256.2 468.9L1260.0 471.2L1256.2 473.5Z"/><path d="M1264.4 464.1L1267.2 462.5V465.8ZM1272.4 464.1L1269.6 462.5V465.8ZM1267.9 461.5h1v5.2h-1Z"/><path d="M1191.5 534.8L1195.3 532.5L1199.1 534.8L1195.3 537.0Z"/><path d="M1203.5 527.7L1206.3 526.1V529.3ZM1211.5 527.7L1208.7 526.1V529.3ZM1207.0 525.1h1v5.2h-1Z"/><path d="M1215.9 520.6L1219.7 518.4L1223.5 520.6L1219.7 522.9Z"/><path d="M1227.9 513.6L1230.7 512.0V515.2ZM1235.9 513.6L1233.1 512.0V515.2ZM1231.4 511.0h1v5.2h-1Z"/><path d="M1240.3 506.5L1244.1 504.2L1247.9 506.5L1244.1 508.8Z"/><path d="M1252.3 499.5L1255.1 497.9V501.1ZM1260.3 499.5L1257.5 497.9V501.1ZM1255.8 496.9h1v5.2h-1Z"/><path d="M1264.7 492.4L1268.5 490.1L1272.3 492.4L1268.5 494.8Z"/><path d="M1276.7 485.4L1279.5 483.8V487.0ZM1284.7 485.4L1281.9 483.8V487.0ZM1280.2 482.8h1v5.2h-1Z"/><path d="M1289.2 478.4L1293.0 476.1L1296.8 478.4L1293.0 480.7Z"/></g>
<g fill="none" stroke="#1a1a1a" stroke-width="1"><polygon points="642.0,228.4 646.3,225.9 706.1,260.4 701.7,262.9"/><polygon points="728.6,278.4 732.9,275.9 803.1,316.4 798.7,318.9"/><polygon points="827.3,335.4 831.6,332.9 901.8,373.4 897.5,375.9"/><polygon points="926.0,392.4 930.4,389.9 1002.2,431.4 997.9,433.9"/><polygon points="1024.8,449.4 1029.1,446.9 1099.2,487.4 1094.9,489.9"/><polygon points="1123.5,506.4 1127.8,503.9 1200.6,545.9 1196.2,548.4"/><polygon points="763.2,159.4 768.4,156.4 827.3,190.4 822.1,193.4"/><polygon points="849.0,208.9 854.2,205.9 901.8,233.4 896.6,236.4"/><polygon points="946.8,265.4 952.0,262.4 1004.0,292.4 998.8,295.4"/><polygon points="1046.4,322.9 1051.6,319.9 1099.2,347.4 1094.0,350.4"/><polygon points="1145.1,379.9 1150.3,376.9 1198.8,404.9 1193.6,407.9"/><polygon points="1243.9,436.9 1249.1,433.9 1296.7,461.4 1291.5,464.4"/></g>
<defs><clipPath id="cB"><polygon points="902.0,208.8 1003.0,236.2 1015.0,260.0 1066.3,273.8 1088.5,320.0 1243.0,366.7 1265.0,411.0 1343.0,437.0 1356.0,463.0 1382.0,468.5 1404.4,514.7 1390.5,529.7 1350.6,535.6 1337.7,550.6 1336.0,551.0 1299.8,545.8 1294.0,545.8 1258.7,538.8 1223.4,531.7 1205.8,526.4 1188.0,515.8 1170.5,507.0 1135.3,500.9 1100.0,494.0 1080.0,486.0 1068.0,478.0 1057.0,468.0 1046.0,456.0 1034.0,443.0 1023.0,435.0 1010.0,431.5 997.6,425.6 979.7,415.6 959.8,403.6 939.8,387.7 923.9,373.8 912.0,357.8 902.0,340.0 896.0,320.0 895.0,300.0 900.0,245.6"/></clipPath><clipPath id="cL1"><polygon points="925.0,215.0 1003.0,236.2 1015.0,260.0 1066.3,273.8 1088.5,320.0 1243.0,366.7 1265.0,411.0 1343.0,437.0 1356.0,463.0 1382.0,468.5 1404.4,514.7 1390.5,529.7 1350.6,535.6 1290.0,498.0 1334.6,485.3 950.0,265.0 915.0,268.0 935.0,250.0 939.0,237.0 913.0,229.0"/></clipPath><clipPath id="cPit"><polygon points="950.0,265.0 1100.0,346.5 1200.0,404.5 1334.6,485.3 1317.0,481.0 1270.0,483.0 1226.0,475.0 1180.0,464.0 1140.0,449.0 1110.0,434.0 1080.0,414.0 1048.0,397.0 1016.0,382.0 988.0,362.0 970.0,341.0 956.0,320.0 944.0,297.0 940.0,268.0"/></clipPath></defs>
<polygon points="902.0,208.8 1003.0,236.2 1015.0,260.0 1066.3,273.8 1088.5,320.0 1243.0,366.7 1265.0,411.0 1343.0,437.0 1356.0,463.0 1382.0,468.5 1404.4,514.7 1390.5,529.7 1350.6,535.6 1337.7,550.6 1336.0,551.0 1299.8,545.8 1294.0,545.8 1258.7,538.8 1223.4,531.7 1205.8,526.4 1188.0,515.8 1170.5,507.0 1135.3,500.9 1100.0,494.0 1080.0,486.0 1068.0,478.0 1057.0,468.0 1046.0,456.0 1034.0,443.0 1023.0,435.0 1010.0,431.5 997.6,425.6 979.7,415.6 959.8,403.6 939.8,387.7 923.9,373.8 912.0,357.8 902.0,340.0 896.0,320.0 895.0,300.0 900.0,245.6" fill="#658cee" fill-opacity="0.76"/>
<g clip-path="url(#cB)" fill="#4a4a55" opacity="0.7"><rect x="625.1" y="219.4" width="2.6" height="2.2"/><rect x="630.7" y="216.2" width="2.6" height="2.2"/><rect x="636.2" y="213.0" width="2.6" height="2.2"/><rect x="641.8" y="209.8" width="2.6" height="2.2"/><rect x="647.3" y="206.6" width="2.6" height="2.2"/><rect x="652.9" y="203.4" width="2.6" height="2.2"/><rect x="658.4" y="200.2" width="2.6" height="2.2"/><rect x="664.0" y="197.0" width="2.6" height="2.2"/><rect x="669.5" y="193.8" width="2.6" height="2.2"/><rect x="675.1" y="190.6" width="2.6" height="2.2"/><rect x="680.6" y="187.4" width="2.6" height="2.2"/><rect x="686.2" y="184.2" width="2.6" height="2.2"/><rect x="691.7" y="180.9" width="2.6" height="2.2"/><rect x="697.3" y="177.7" width="2.6" height="2.2"/><rect x="702.8" y="174.5" width="2.6" height="2.2"/><rect x="708.4" y="171.3" width="2.6" height="2.2"/><rect x="713.9" y="168.1" width="2.6" height="2.2"/><rect x="719.5" y="164.9" width="2.6" height="2.2"/><rect x="725.0" y="161.7" width="2.6" height="2.2"/><rect x="730.6" y="158.5" width="2.6" height="2.2"/><rect x="736.1" y="155.3" width="2.6" height="2.2"/><rect x="741.7" y="152.1" width="2.6" height="2.2"/><rect x="747.2" y="148.9" width="2.6" height="2.2"/><rect x="751.5" y="146.4" width="2.6" height="2.2"/><rect x="759.3" y="150.9" width="2.6" height="2.2"/><rect x="767.1" y="155.4" width="2.6" height="2.2"/><rect x="826.0" y="189.4" width="2.6" height="2.2"/><rect x="832.7" y="193.3" width="2.6" height="2.2"/><rect x="839.4" y="197.2" width="2.6" height="2.2"/><rect x="846.1" y="201.0" width="2.6" height="2.2"/><rect x="852.9" y="204.9" width="2.6" height="2.2"/><rect x="900.5" y="232.4" width="2.6" height="2.2"/><rect x="906.8" y="236.0" width="2.6" height="2.2"/><rect x="913.0" y="239.7" width="2.6" height="2.2"/><rect x="919.3" y="243.3" width="2.6" height="2.2"/><rect x="925.6" y="246.9" width="2.6" height="2.2"/><rect x="931.9" y="250.5" width="2.6" height="2.2"/><rect x="938.2" y="254.2" width="2.6" height="2.2"/><rect x="944.4" y="257.8" width="2.6" height="2.2"/><rect x="950.7" y="261.4" width="2.6" height="2.2"/><rect x="1002.7" y="291.4" width="2.6" height="2.2"/><rect x="1009.5" y="295.3" width="2.6" height="2.2"/><rect x="1016.3" y="299.3" width="2.6" height="2.2"/><rect x="1023.1" y="303.2" width="2.6" height="2.2"/><rect x="1029.9" y="307.1" width="2.6" height="2.2"/><rect x="1036.7" y="311.0" width="2.6" height="2.2"/><rect x="1043.5" y="315.0" width="2.6" height="2.2"/><rect x="1050.3" y="318.9" width="2.6" height="2.2"/><rect x="1097.9" y="346.4" width="2.6" height="2.2"/><rect x="1104.3" y="350.1" width="2.6" height="2.2"/><rect x="1110.7" y="353.8" width="2.6" height="2.2"/><rect x="1117.1" y="357.5" width="2.6" height="2.2"/><rect x="1123.5" y="361.1" width="2.6" height="2.2"/><rect x="1129.9" y="364.8" width="2.6" height="2.2"/><rect x="1136.3" y="368.5" width="2.6" height="2.2"/><rect x="1142.6" y="372.2" width="2.6" height="2.2"/><rect x="1149.0" y="375.9" width="2.6" height="2.2"/><rect x="1197.5" y="403.9" width="2.6" height="2.2"/><rect x="1203.8" y="407.5" width="2.6" height="2.2"/><rect x="1210.1" y="411.1" width="2.6" height="2.2"/><rect x="1216.4" y="414.8" width="2.6" height="2.2"/><rect x="1222.6" y="418.4" width="2.6" height="2.2"/><rect x="1228.9" y="422.0" width="2.6" height="2.2"/><rect x="1235.2" y="425.6" width="2.6" height="2.2"/><rect x="1241.5" y="429.3" width="2.6" height="2.2"/><rect x="1247.8" y="432.9" width="2.6" height="2.2"/><rect x="1295.4" y="460.4" width="2.6" height="2.2"/><rect x="1302.1" y="464.3" width="2.6" height="2.2"/><rect x="1308.8" y="468.1" width="2.6" height="2.2"/><rect x="1315.5" y="472.0" width="2.6" height="2.2"/><rect x="1322.2" y="475.9" width="2.6" height="2.2"/><rect x="1328.9" y="479.8" width="2.6" height="2.2"/><rect x="1335.7" y="483.6" width="2.6" height="2.2"/><rect x="1342.4" y="487.5" width="2.6" height="2.2"/><rect x="1349.1" y="491.4" width="2.6" height="2.2"/><rect x="623.4" y="220.4" width="2.6" height="2.2"/><rect x="630.7" y="224.7" width="2.6" height="2.2"/><rect x="638.1" y="228.9" width="2.6" height="2.2"/><rect x="629.4" y="216.9" width="2.6" height="2.2"/><rect x="636.8" y="221.2" width="2.6" height="2.2"/><rect x="644.2" y="225.4" width="2.6" height="2.2"/><rect x="634.6" y="213.9" width="2.6" height="2.2"/><rect x="642.0" y="218.2" width="2.6" height="2.2"/><rect x="649.3" y="222.4" width="2.6" height="2.2"/><rect x="697.8" y="263.4" width="2.6" height="2.2"/><rect x="703.2" y="266.5" width="2.6" height="2.2"/><rect x="708.6" y="269.6" width="2.6" height="2.2"/><rect x="714.0" y="272.7" width="2.6" height="2.2"/><rect x="719.3" y="275.8" width="2.6" height="2.2"/><rect x="724.7" y="278.9" width="2.6" height="2.2"/><rect x="703.9" y="259.9" width="2.6" height="2.2"/><rect x="709.3" y="263.0" width="2.6" height="2.2"/><rect x="714.6" y="266.1" width="2.6" height="2.2"/><rect x="720.0" y="269.2" width="2.6" height="2.2"/><rect x="725.4" y="272.3" width="2.6" height="2.2"/><rect x="730.8" y="275.4" width="2.6" height="2.2"/><rect x="709.1" y="256.9" width="2.6" height="2.2"/><rect x="714.5" y="260.0" width="2.6" height="2.2"/><rect x="719.8" y="263.1" width="2.6" height="2.2"/><rect x="725.2" y="266.2" width="2.6" height="2.2"/><rect x="730.6" y="269.3" width="2.6" height="2.2"/><rect x="735.9" y="272.4" width="2.6" height="2.2"/><rect x="794.8" y="319.4" width="2.6" height="2.2"/><rect x="800.6" y="322.7" width="2.6" height="2.2"/><rect x="806.3" y="326.0" width="2.6" height="2.2"/><rect x="812.0" y="329.3" width="2.6" height="2.2"/><rect x="817.7" y="332.6" width="2.6" height="2.2"/><rect x="823.4" y="335.9" width="2.6" height="2.2"/><rect x="800.9" y="315.9" width="2.6" height="2.2"/><rect x="806.6" y="319.2" width="2.6" height="2.2"/><rect x="812.3" y="322.5" width="2.6" height="2.2"/><rect x="818.0" y="325.8" width="2.6" height="2.2"/><rect x="823.8" y="329.1" width="2.6" height="2.2"/><rect x="829.5" y="332.4" width="2.6" height="2.2"/><rect x="806.1" y="312.9" width="2.6" height="2.2"/><rect x="811.8" y="316.2" width="2.6" height="2.2"/><rect x="817.5" y="319.5" width="2.6" height="2.2"/><rect x="823.2" y="322.8" width="2.6" height="2.2"/><rect x="829.0" y="326.1" width="2.6" height="2.2"/><rect x="834.7" y="329.4" width="2.6" height="2.2"/><rect x="893.6" y="376.4" width="2.6" height="2.2"/><rect x="899.3" y="379.7" width="2.6" height="2.2"/><rect x="905.0" y="383.0" width="2.6" height="2.2"/><rect x="910.7" y="386.3" width="2.6" height="2.2"/><rect x="916.4" y="389.6" width="2.6" height="2.2"/><rect x="922.1" y="392.9" width="2.6" height="2.2"/><rect x="899.6" y="372.9" width="2.6" height="2.2"/><rect x="905.3" y="376.2" width="2.6" height="2.2"/><rect x="911.1" y="379.5" width="2.6" height="2.2"/><rect x="916.8" y="382.8" width="2.6" height="2.2"/><rect x="922.5" y="386.1" width="2.6" height="2.2"/><rect x="928.2" y="389.4" width="2.6" height="2.2"/><rect x="904.8" y="369.9" width="2.6" height="2.2"/><rect x="910.5" y="373.2" width="2.6" height="2.2"/><rect x="916.2" y="376.5" width="2.6" height="2.2"/><rect x="922.0" y="379.8" width="2.6" height="2.2"/><rect x="927.7" y="383.1" width="2.6" height="2.2"/><rect x="933.4" y="386.4" width="2.6" height="2.2"/><rect x="994.0" y="434.4" width="2.6" height="2.2"/><rect x="999.4" y="437.5" width="2.6" height="2.2"/><rect x="1004.8" y="440.6" width="2.6" height="2.2"/><rect x="1010.1" y="443.7" width="2.6" height="2.2"/><rect x="1015.5" y="446.8" width="2.6" height="2.2"/><rect x="1020.9" y="449.9" width="2.6" height="2.2"/><rect x="1000.1" y="430.9" width="2.6" height="2.2"/><rect x="1005.4" y="434.0" width="2.6" height="2.2"/><rect x="1010.8" y="437.1" width="2.6" height="2.2"/><rect x="1016.2" y="440.2" width="2.6" height="2.2"/><rect x="1021.6" y="443.3" width="2.6" height="2.2"/><rect x="1026.9" y="446.4" width="2.6" height="2.2"/><rect x="1005.3" y="427.9" width="2.6" height="2.2"/><rect x="1010.6" y="431.0" width="2.6" height="2.2"/><rect x="1016.0" y="434.1" width="2.6" height="2.2"/><rect x="1021.4" y="437.2" width="2.6" height="2.2"/><rect x="1026.8" y="440.3" width="2.6" height="2.2"/><rect x="1032.1" y="443.4" width="2.6" height="2.2"/><rect x="1091.0" y="490.4" width="2.6" height="2.2"/><rect x="1096.7" y="493.7" width="2.6" height="2.2"/><rect x="1102.4" y="497.0" width="2.6" height="2.2"/><rect x="1108.2" y="500.3" width="2.6" height="2.2"/><rect x="1113.9" y="503.6" width="2.6" height="2.2"/><rect x="1119.6" y="506.9" width="2.6" height="2.2"/><rect x="1097.1" y="486.9" width="2.6" height="2.2"/><rect x="1102.8" y="490.2" width="2.6" height="2.2"/><rect x="1108.5" y="493.5" width="2.6" height="2.2"/><rect x="1114.2" y="496.8" width="2.6" height="2.2"/><rect x="1119.9" y="500.1" width="2.6" height="2.2"/><rect x="1125.6" y="503.4" width="2.6" height="2.2"/><rect x="1102.3" y="483.9" width="2.6" height="2.2"/><rect x="1108.0" y="487.2" width="2.6" height="2.2"/><rect x="1113.7" y="490.5" width="2.6" height="2.2"/><rect x="1119.4" y="493.8" width="2.6" height="2.2"/><rect x="1125.1" y="497.1" width="2.6" height="2.2"/><rect x="1130.8" y="500.4" width="2.6" height="2.2"/><rect x="1192.3" y="548.9" width="2.6" height="2.2"/><rect x="1198.0" y="552.2" width="2.6" height="2.2"/><rect x="1203.8" y="555.5" width="2.6" height="2.2"/><rect x="1209.5" y="558.8" width="2.6" height="2.2"/><rect x="1215.2" y="562.1" width="2.6" height="2.2"/><rect x="1220.9" y="565.4" width="2.6" height="2.2"/><rect x="1198.4" y="545.4" width="2.6" height="2.2"/><rect x="1204.1" y="548.7" width="2.6" height="2.2"/><rect x="1209.8" y="552.0" width="2.6" height="2.2"/><rect x="1215.5" y="555.3" width="2.6" height="2.2"/><rect x="1221.3" y="558.6" width="2.6" height="2.2"/><rect x="1227.0" y="561.9" width="2.6" height="2.2"/><rect x="1203.6" y="542.4" width="2.6" height="2.2"/><rect x="1209.3" y="545.7" width="2.6" height="2.2"/><rect x="1215.0" y="549.0" width="2.6" height="2.2"/><rect x="1220.7" y="552.3" width="2.6" height="2.2"/><rect x="1226.5" y="555.6" width="2.6" height="2.2"/><rect x="1232.2" y="558.9" width="2.6" height="2.2"/><rect x="649.3" y="222.4" width="2.6" height="2.2"/><rect x="661.3" y="229.3" width="2.6" height="2.2"/><rect x="673.2" y="236.2" width="2.6" height="2.2"/><rect x="685.2" y="243.1" width="2.6" height="2.2"/><rect x="697.2" y="250.0" width="2.6" height="2.2"/><rect x="709.1" y="256.9" width="2.6" height="2.2"/><rect x="735.9" y="272.4" width="2.6" height="2.2"/><rect x="747.6" y="279.1" width="2.6" height="2.2"/><rect x="759.3" y="285.9" width="2.6" height="2.2"/><rect x="771.0" y="292.6" width="2.6" height="2.2"/><rect x="782.7" y="299.4" width="2.6" height="2.2"/><rect x="794.4" y="306.1" width="2.6" height="2.2"/><rect x="806.1" y="312.9" width="2.6" height="2.2"/><rect x="834.7" y="329.4" width="2.6" height="2.2"/><rect x="846.4" y="336.1" width="2.6" height="2.2"/><rect x="858.1" y="342.9" width="2.6" height="2.2"/><rect x="869.7" y="349.6" width="2.6" height="2.2"/><rect x="881.4" y="356.4" width="2.6" height="2.2"/><rect x="893.1" y="363.1" width="2.6" height="2.2"/><rect x="904.8" y="369.9" width="2.6" height="2.2"/><rect x="933.4" y="386.4" width="2.6" height="2.2"/><rect x="945.4" y="393.3" width="2.6" height="2.2"/><rect x="957.4" y="400.2" width="2.6" height="2.2"/><rect x="969.3" y="407.1" width="2.6" height="2.2"/><rect x="981.3" y="414.1" width="2.6" height="2.2"/><rect x="993.3" y="421.0" width="2.6" height="2.2"/><rect x="1005.3" y="427.9" width="2.6" height="2.2"/><rect x="1032.1" y="443.4" width="2.6" height="2.2"/><rect x="1043.8" y="450.1" width="2.6" height="2.2"/><rect x="1055.5" y="456.9" width="2.6" height="2.2"/><rect x="1067.2" y="463.6" width="2.6" height="2.2"/><rect x="1078.9" y="470.4" width="2.6" height="2.2"/><rect x="1090.6" y="477.1" width="2.6" height="2.2"/><rect x="1102.3" y="483.9" width="2.6" height="2.2"/><rect x="1130.8" y="500.4" width="2.6" height="2.2"/><rect x="1141.2" y="506.4" width="2.6" height="2.2"/><rect x="1151.6" y="512.4" width="2.6" height="2.2"/><rect x="1162.0" y="518.4" width="2.6" height="2.2"/><rect x="1172.4" y="524.4" width="2.6" height="2.2"/><rect x="1182.8" y="530.4" width="2.6" height="2.2"/><rect x="1193.2" y="536.4" width="2.6" height="2.2"/><rect x="1203.6" y="542.4" width="2.6" height="2.2"/><path d="M661.0 228.4L664.8 226.1L668.6 228.4L664.8 230.8Z"/><path d="M673.0 221.4L675.8 219.8V223.0ZM681.0 221.4L678.2 219.8V223.0ZM676.5 218.8h1v5.2h-1Z"/><path d="M685.4 214.3L689.2 212.0L693.0 214.3L689.2 216.7Z"/><path d="M697.4 207.3L700.2 205.7V208.9ZM705.4 207.3L702.6 205.7V208.9ZM700.9 204.7h1v5.2h-1Z"/><path d="M709.8 200.2L713.6 197.9L717.4 200.2L713.6 202.6Z"/><path d="M721.8 193.2L724.6 191.6V194.8ZM729.8 193.2L727.0 191.6V194.8ZM725.3 190.6h1v5.2h-1Z"/><path d="M734.2 186.2L738.0 183.8L741.8 186.2L738.0 188.5Z"/><path d="M746.2 179.1L749.0 177.5V180.7ZM754.2 179.1L751.4 177.5V180.7ZM749.7 176.5h1v5.2h-1Z"/><path d="M758.6 172.1L762.4 169.8L766.2 172.1L762.4 174.4Z"/><path d="M685.2 242.5L688.0 240.9V244.1ZM693.2 242.5L690.4 240.9V244.1ZM688.7 239.9h1v5.2h-1Z"/><path d="M697.6 235.5L701.4 233.2L705.2 235.5L701.4 237.8Z"/><path d="M709.6 228.4L712.4 226.8V230.0ZM717.6 228.4L714.8 226.8V230.0ZM713.1 225.8h1v5.2h-1Z"/><path d="M722.0 221.4L725.8 219.1L729.6 221.4L725.8 223.7Z"/><path d="M734.0 214.3L736.8 212.8V215.9ZM742.0 214.3L739.2 212.8V215.9ZM737.5 211.8h1v5.2h-1Z"/><path d="M746.4 207.3L750.2 205.0L754.0 207.3L750.2 209.6Z"/><path d="M758.4 200.2L761.2 198.7V201.8ZM766.4 200.2L763.6 198.7V201.8ZM761.9 197.7h1v5.2h-1Z"/><path d="M770.9 193.2L774.7 190.9L778.5 193.2L774.7 195.5Z"/><path d="M782.9 186.2L785.7 184.6V187.8ZM790.9 186.2L788.1 184.6V187.8ZM786.4 183.6h1v5.2h-1Z"/><path d="M709.8 256.6L713.6 254.3L717.4 256.6L713.6 258.9Z"/><path d="M721.8 249.6L724.6 248.0V251.2ZM729.8 249.6L727.0 248.0V251.2ZM725.3 247.0h1v5.2h-1Z"/><path d="M734.2 242.6L738.0 240.2L741.8 242.6L738.0 244.9Z"/><path d="M746.2 235.5L749.0 233.9V237.1ZM754.2 235.5L751.4 233.9V237.1ZM749.7 232.9h1v5.2h-1Z"/><path d="M758.6 228.4L762.4 226.1L766.2 228.4L762.4 230.8Z"/><path d="M770.7 221.4L773.5 219.8V223.0ZM778.7 221.4L775.9 219.8V223.0ZM774.2 218.8h1v5.2h-1Z"/><path d="M783.1 214.4L786.9 212.1L790.7 214.4L786.9 216.7Z"/><path d="M795.1 207.3L797.9 205.7V208.9ZM803.1 207.3L800.3 205.7V208.9ZM798.6 204.7h1v5.2h-1Z"/><path d="M807.5 200.2L811.3 197.9L815.1 200.2L811.3 202.6Z"/><path d="M734.0 270.8L736.8 269.1V272.4ZM742.0 270.8L739.2 269.1V272.4ZM737.5 268.1h1v5.2h-1Z"/><path d="M746.4 263.7L750.2 261.4L754.0 263.7L750.2 266.0Z"/><path d="M758.4 256.6L761.2 255.0V258.2ZM766.4 256.6L763.6 255.0V258.2ZM761.9 254.0h1v5.2h-1Z"/><path d="M770.9 249.6L774.7 247.3L778.5 249.6L774.7 251.9Z"/><path d="M782.9 242.6L785.7 241.0V244.2ZM790.9 242.6L788.1 241.0V244.2ZM786.4 240.0h1v5.2h-1Z"/><path d="M795.3 235.5L799.1 233.2L802.9 235.5L799.1 237.8Z"/><path d="M807.3 228.5L810.1 226.9V230.1ZM815.3 228.5L812.5 226.9V230.1ZM810.8 225.9h1v5.2h-1Z"/><path d="M819.7 221.4L823.5 219.1L827.3 221.4L823.5 223.7Z"/><path d="M831.7 214.4L834.5 212.8V216.0ZM839.7 214.4L836.9 212.8V216.0ZM835.2 211.8h1v5.2h-1Z"/><path d="M758.6 284.9L762.4 282.6L766.2 284.9L762.4 287.2Z"/><path d="M770.7 277.8L773.5 276.2V279.4ZM778.7 277.8L775.9 276.2V279.4ZM774.2 275.2h1v5.2h-1Z"/><path d="M783.1 270.8L786.9 268.4L790.7 270.8L786.9 273.1Z"/><path d="M795.1 263.7L797.9 262.1V265.3ZM803.1 263.7L800.3 262.1V265.3ZM798.6 261.1h1v5.2h-1Z"/><path d="M807.5 256.6L811.3 254.3L815.1 256.6L811.3 258.9Z"/><path d="M819.5 249.6L822.3 248.0V251.2ZM827.5 249.6L824.7 248.0V251.2ZM823.0 247.0h1v5.2h-1Z"/><path d="M831.9 242.6L835.7 240.2L839.5 242.6L835.7 244.9Z"/><path d="M843.9 235.5L846.7 233.9V237.1ZM851.9 235.5L849.1 233.9V237.1ZM847.4 232.9h1v5.2h-1Z"/><path d="M856.3 228.5L860.1 226.2L863.9 228.5L860.1 230.8Z"/><path d="M782.9 298.9L785.7 297.3V300.6ZM790.9 298.9L788.1 297.3V300.6ZM786.4 296.3h1v5.2h-1Z"/><path d="M795.3 291.9L799.1 289.6L802.9 291.9L799.1 294.2Z"/><path d="M807.3 284.9L810.1 283.2V286.5ZM815.3 284.9L812.5 283.2V286.5ZM810.8 282.2h1v5.2h-1Z"/><path d="M819.7 277.8L823.5 275.5L827.3 277.8L823.5 280.1Z"/><path d="M831.7 270.8L834.5 269.1V272.4ZM839.7 270.8L836.9 269.1V272.4ZM835.2 268.1h1v5.2h-1Z"/><path d="M844.1 263.7L847.9 261.4L851.7 263.7L847.9 266.0Z"/><path d="M856.1 256.6L858.9 255.0V258.2ZM864.1 256.6L861.3 255.0V258.2ZM859.6 254.0h1v5.2h-1Z"/><path d="M868.5 249.6L872.3 247.3L876.1 249.6L872.3 251.9Z"/><path d="M880.6 242.6L883.4 241.0V244.2ZM888.6 242.6L885.8 241.0V244.2ZM884.1 240.0h1v5.2h-1Z"/><path d="M807.5 313.0L811.3 310.7L815.1 313.0L811.3 315.3Z"/><path d="M819.5 306.0L822.3 304.4V307.6ZM827.5 306.0L824.7 304.4V307.6ZM823.0 303.4h1v5.2h-1Z"/><path d="M831.9 298.9L835.7 296.6L839.5 298.9L835.7 301.2Z"/><path d="M843.9 291.9L846.7 290.3V293.5ZM851.9 291.9L849.1 290.3V293.5ZM847.4 289.3h1v5.2h-1Z"/><path d="M856.3 284.9L860.1 282.6L863.9 284.9L860.1 287.2Z"/><path d="M868.3 277.8L871.1 276.2V279.4ZM876.3 277.8L873.5 276.2V279.4ZM871.8 275.2h1v5.2h-1Z"/><path d="M880.8 270.8L884.6 268.4L888.4 270.8L884.6 273.1Z"/><path d="M892.8 263.7L895.6 262.1V265.3ZM900.8 263.7L898.0 262.1V265.3ZM896.3 261.1h1v5.2h-1Z"/><path d="M905.2 256.6L909.0 254.3L912.8 256.6L909.0 258.9Z"/><path d="M845.9 335.4L848.7 333.8V337.0ZM853.9 335.4L851.1 333.8V337.0ZM849.4 332.8h1v5.2h-1Z"/><path d="M858.3 328.3L862.1 326.0L865.9 328.3L862.1 330.6Z"/><path d="M870.3 321.2L873.1 319.6V322.9ZM878.3 321.2L875.5 319.6V322.9ZM873.8 318.6h1v5.2h-1Z"/><path d="M882.7 314.2L886.5 311.9L890.3 314.2L886.5 316.5Z"/><path d="M894.8 307.1L897.6 305.5V308.8ZM902.8 307.1L900.0 305.5V308.8ZM898.3 304.5h1v5.2h-1Z"/><path d="M907.2 300.1L911.0 297.8L914.8 300.1L911.0 302.4Z"/><path d="M919.2 293.1L922.0 291.4V294.7ZM927.2 293.1L924.4 291.4V294.7ZM922.7 290.4h1v5.2h-1Z"/><path d="M931.6 286.0L935.4 283.7L939.2 286.0L935.4 288.3Z"/><path d="M943.6 279.0L946.4 277.4V280.6ZM951.6 279.0L948.8 277.4V280.6ZM947.1 276.4h1v5.2h-1Z"/><path d="M870.7 349.5L874.5 347.2L878.3 349.5L874.5 351.8Z"/><path d="M882.7 342.5L885.5 340.9V344.1ZM890.7 342.5L887.9 340.9V344.1ZM886.2 339.9h1v5.2h-1Z"/><path d="M895.1 335.4L898.9 333.1L902.7 335.4L898.9 337.8Z"/><path d="M907.1 328.4L909.9 326.8V330.0ZM915.1 328.4L912.3 326.8V330.0ZM910.6 325.8h1v5.2h-1Z"/><path d="M919.6 321.4L923.4 319.1L927.2 321.4L923.4 323.7Z"/><path d="M931.6 314.3L934.4 312.7V315.9ZM939.6 314.3L936.8 312.7V315.9ZM935.1 311.7h1v5.2h-1Z"/><path d="M944.0 307.2L947.8 304.9L951.6 307.2L947.8 309.6Z"/><path d="M956.0 300.2L958.8 298.6V301.8ZM964.0 300.2L961.2 298.6V301.8ZM959.5 297.6h1v5.2h-1Z"/><path d="M968.4 293.1L972.2 290.8L976.0 293.1L972.2 295.4Z"/><path d="M895.1 363.8L897.9 362.1V365.4ZM903.1 363.8L900.3 362.1V365.4ZM898.6 361.1h1v5.2h-1Z"/><path d="M907.5 356.7L911.3 354.4L915.1 356.7L911.3 359.0Z"/><path d="M919.5 349.6L922.3 348.0V351.2ZM927.5 349.6L924.7 348.0V351.2ZM923.0 347.0h1v5.2h-1Z"/><path d="M931.9 342.6L935.7 340.3L939.5 342.6L935.7 344.9Z"/><path d="M943.9 335.6L946.7 333.9V337.2ZM951.9 335.6L949.1 333.9V337.2ZM947.4 332.9h1v5.2h-1Z"/><path d="M956.4 328.5L960.2 326.2L964.0 328.5L960.2 330.8Z"/><path d="M968.4 321.5L971.2 319.9V323.1ZM976.4 321.5L973.6 319.9V323.1ZM971.9 318.9h1v5.2h-1Z"/><path d="M980.8 314.4L984.6 312.1L988.4 314.4L984.6 316.7Z"/><path d="M992.8 307.4L995.6 305.8V309.0ZM1000.8 307.4L998.0 305.8V309.0ZM996.3 304.8h1v5.2h-1Z"/><path d="M944.8 392.4L948.6 390.1L952.4 392.4L948.6 394.7Z"/><path d="M956.8 385.3L959.6 383.7V386.9ZM964.8 385.3L962.0 383.7V386.9ZM960.3 382.7h1v5.2h-1Z"/><path d="M969.3 378.2L973.1 375.9L976.9 378.2L973.1 380.6Z"/><path d="M981.3 371.2L984.1 369.6V372.8ZM989.3 371.2L986.5 369.6V372.8ZM984.8 368.6h1v5.2h-1Z"/><path d="M993.7 364.1L997.5 361.8L1001.3 364.1L997.5 366.4Z"/><path d="M1005.7 357.1L1008.5 355.5V358.7ZM1013.7 357.1L1010.9 355.5V358.7ZM1009.2 354.5h1v5.2h-1Z"/><path d="M1018.1 350.1L1021.9 347.8L1025.7 350.1L1021.9 352.4Z"/><path d="M1030.1 343.0L1032.9 341.4V344.6ZM1038.1 343.0L1035.3 341.4V344.6ZM1033.6 340.4h1v5.2h-1Z"/><path d="M1042.5 336.0L1046.3 333.7L1050.1 336.0L1046.3 338.3Z"/><path d="M969.2 406.5L972.0 404.9V408.1ZM977.2 406.5L974.4 404.9V408.1ZM972.7 403.9h1v5.2h-1Z"/><path d="M981.6 399.5L985.4 397.2L989.2 399.5L985.4 401.8Z"/><path d="M993.7 392.4L996.5 390.8V394.1ZM1001.7 392.4L998.9 390.8V394.1ZM997.2 389.8h1v5.2h-1Z"/><path d="M1006.1 385.4L1009.9 383.1L1013.7 385.4L1009.9 387.7Z"/><path d="M1018.1 378.4L1020.9 376.8V380.0ZM1026.1 378.4L1023.3 376.8V380.0ZM1021.6 375.8h1v5.2h-1Z"/><path d="M1030.5 371.3L1034.3 369.0L1038.1 371.3L1034.3 373.6Z"/><path d="M1042.5 364.2L1045.3 362.6V365.9ZM1050.5 364.2L1047.7 362.6V365.9ZM1046.0 361.6h1v5.2h-1Z"/><path d="M1054.9 357.2L1058.7 354.9L1062.5 357.2L1058.7 359.5Z"/><path d="M1066.9 350.1L1069.7 348.5V351.8ZM1074.9 350.1L1072.1 348.5V351.8ZM1070.4 347.5h1v5.2h-1Z"/><path d="M994.0 420.8L997.8 418.4L1001.6 420.8L997.8 423.1Z"/><path d="M1006.0 413.7L1008.8 412.1V415.3ZM1014.0 413.7L1011.2 412.1V415.3ZM1009.5 411.1h1v5.2h-1Z"/><path d="M1018.4 406.6L1022.2 404.3L1026.0 406.6L1022.2 408.9Z"/><path d="M1030.5 399.6L1033.3 398.0V401.2ZM1038.5 399.6L1035.7 398.0V401.2ZM1034.0 397.0h1v5.2h-1Z"/><path d="M1042.9 392.6L1046.7 390.2L1050.5 392.6L1046.7 394.9Z"/><path d="M1054.9 385.5L1057.7 383.9V387.1ZM1062.9 385.5L1060.1 383.9V387.1ZM1058.4 382.9h1v5.2h-1Z"/><path d="M1067.3 378.5L1071.1 376.2L1074.9 378.5L1071.1 380.8Z"/><path d="M1079.3 371.4L1082.1 369.8V373.0ZM1087.3 371.4L1084.5 369.8V373.0ZM1082.8 368.8h1v5.2h-1Z"/><path d="M1091.7 364.4L1095.5 362.1L1099.3 364.4L1095.5 366.7Z"/><path d="M1043.4 449.4L1046.2 447.8V451.0ZM1051.4 449.4L1048.6 447.8V451.0ZM1046.9 446.8h1v5.2h-1Z"/><path d="M1055.8 442.3L1059.6 440.0L1063.4 442.3L1059.6 444.6Z"/><path d="M1067.8 435.2L1070.6 433.6V436.9ZM1075.8 435.2L1073.0 433.6V436.9ZM1071.3 432.6h1v5.2h-1Z"/><path d="M1080.2 428.2L1084.0 425.9L1087.8 428.2L1084.0 430.5Z"/><path d="M1092.2 421.1L1095.0 419.5V422.8ZM1100.2 421.1L1097.4 419.5V422.8ZM1095.7 418.5h1v5.2h-1Z"/><path d="M1104.6 414.1L1108.4 411.8L1112.2 414.1L1108.4 416.4Z"/><path d="M1116.6 407.1L1119.4 405.4V408.7ZM1124.6 407.1L1121.8 405.4V408.7ZM1120.1 404.4h1v5.2h-1Z"/><path d="M1129.0 400.0L1132.8 397.7L1136.6 400.0L1132.8 402.3Z"/><path d="M1141.0 393.0L1143.8 391.4V394.6ZM1149.0 393.0L1146.2 391.4V394.6ZM1144.5 390.4h1v5.2h-1Z"/><path d="M1068.2 463.5L1072.0 461.2L1075.8 463.5L1072.0 465.8Z"/><path d="M1080.2 456.5L1083.0 454.9V458.1ZM1088.2 456.5L1085.4 454.9V458.1ZM1083.7 453.9h1v5.2h-1Z"/><path d="M1092.6 449.4L1096.4 447.1L1100.2 449.4L1096.4 451.8Z"/><path d="M1104.6 442.4L1107.4 440.8V444.0ZM1112.6 442.4L1109.8 440.8V444.0ZM1108.1 439.8h1v5.2h-1Z"/><path d="M1117.0 435.4L1120.8 433.1L1124.6 435.4L1120.8 437.7Z"/><path d="M1129.0 428.3L1131.8 426.7V429.9ZM1137.0 428.3L1134.2 426.7V429.9ZM1132.5 425.7h1v5.2h-1Z"/><path d="M1141.4 421.2L1145.2 418.9L1149.0 421.2L1145.2 423.6Z"/><path d="M1153.4 414.2L1156.2 412.6V415.8ZM1161.4 414.2L1158.6 412.6V415.8ZM1156.9 411.6h1v5.2h-1Z"/><path d="M1165.8 407.1L1169.6 404.8L1173.4 407.1L1169.6 409.4Z"/><path d="M1092.6 477.8L1095.4 476.1V479.4ZM1100.6 477.8L1097.8 476.1V479.4ZM1096.1 475.1h1v5.2h-1Z"/><path d="M1105.0 470.7L1108.8 468.4L1112.6 470.7L1108.8 473.0Z"/><path d="M1117.0 463.6L1119.8 462.0V465.2ZM1125.0 463.6L1122.2 462.0V465.2ZM1120.5 461.0h1v5.2h-1Z"/><path d="M1129.4 456.6L1133.2 454.3L1137.0 456.6L1133.2 458.9Z"/><path d="M1141.4 449.5L1144.2 447.9V451.1ZM1149.4 449.5L1146.6 447.9V451.1ZM1144.9 446.9h1v5.2h-1Z"/><path d="M1153.8 442.5L1157.6 440.2L1161.4 442.5L1157.6 444.8Z"/><path d="M1165.8 435.4L1168.6 433.8V437.1ZM1173.8 435.4L1171.0 433.8V437.1ZM1169.3 432.8h1v5.2h-1Z"/><path d="M1178.2 428.4L1182.0 426.1L1185.8 428.4L1182.0 430.7Z"/><path d="M1190.2 421.4L1193.0 419.8V423.0ZM1198.2 421.4L1195.4 419.8V423.0ZM1193.7 418.8h1v5.2h-1Z"/><path d="M1142.3 506.4L1146.1 504.1L1149.9 506.4L1146.1 508.7Z"/><path d="M1154.3 499.3L1157.1 497.7V500.9ZM1162.3 499.3L1159.5 497.7V500.9ZM1157.8 496.7h1v5.2h-1Z"/><path d="M1166.7 492.2L1170.5 489.9L1174.3 492.2L1170.5 494.6Z"/><path d="M1178.7 485.2L1181.5 483.6V486.8ZM1186.7 485.2L1183.9 483.6V486.8ZM1182.2 482.6h1v5.2h-1Z"/><path d="M1191.1 478.1L1194.9 475.8L1198.7 478.1L1194.9 480.4Z"/><path d="M1203.1 471.1L1205.9 469.5V472.7ZM1211.1 471.1L1208.3 469.5V472.7ZM1206.6 468.5h1v5.2h-1Z"/><path d="M1215.6 464.1L1219.4 461.8L1223.2 464.1L1219.4 466.4Z"/><path d="M1227.6 457.0L1230.4 455.4V458.6ZM1235.6 457.0L1232.8 455.4V458.6ZM1231.1 454.4h1v5.2h-1Z"/><path d="M1240.0 450.0L1243.8 447.7L1247.6 450.0L1243.8 452.3Z"/><path d="M1166.7 520.5L1169.5 518.9V522.1ZM1174.7 520.5L1171.9 518.9V522.1ZM1170.2 517.9h1v5.2h-1Z"/><path d="M1179.1 513.5L1182.9 511.2L1186.7 513.5L1182.9 515.8Z"/><path d="M1191.1 506.4L1193.9 504.8V508.1ZM1199.1 506.4L1196.3 504.8V508.1ZM1194.6 503.8h1v5.2h-1Z"/><path d="M1203.5 499.4L1207.3 497.1L1211.1 499.4L1207.3 501.7Z"/><path d="M1215.5 492.4L1218.3 490.8V494.0ZM1223.5 492.4L1220.7 490.8V494.0ZM1219.0 489.8h1v5.2h-1Z"/><path d="M1227.9 485.3L1231.7 483.0L1235.5 485.3L1231.7 487.6Z"/><path d="M1239.9 478.2L1242.7 476.6V479.9ZM1247.9 478.2L1245.1 476.6V479.9ZM1243.4 475.6h1v5.2h-1Z"/><path d="M1252.4 471.2L1256.2 468.9L1260.0 471.2L1256.2 473.5Z"/><path d="M1264.4 464.1L1267.2 462.5V465.8ZM1272.4 464.1L1269.6 462.5V465.8ZM1267.9 461.5h1v5.2h-1Z"/><path d="M1191.5 534.8L1195.3 532.5L1199.1 534.8L1195.3 537.0Z"/><path d="M1203.5 527.7L1206.3 526.1V529.3ZM1211.5 527.7L1208.7 526.1V529.3ZM1207.0 525.1h1v5.2h-1Z"/><path d="M1215.9 520.6L1219.7 518.4L1223.5 520.6L1219.7 522.9Z"/><path d="M1227.9 513.6L1230.7 512.0V515.2ZM1235.9 513.6L1233.1 512.0V515.2ZM1231.4 511.0h1v5.2h-1Z"/><path d="M1240.3 506.5L1244.1 504.2L1247.9 506.5L1244.1 508.8Z"/><path d="M1252.3 499.5L1255.1 497.9V501.1ZM1260.3 499.5L1257.5 497.9V501.1ZM1255.8 496.9h1v5.2h-1Z"/><path d="M1264.7 492.4L1268.5 490.1L1272.3 492.4L1268.5 494.8Z"/><path d="M1276.7 485.4L1279.5 483.8V487.0ZM1284.7 485.4L1281.9 483.8V487.0ZM1280.2 482.8h1v5.2h-1Z"/><path d="M1289.2 478.4L1293.0 476.1L1296.8 478.4L1293.0 480.7Z"/></g>
<g clip-path="url(#cB)" fill="none" stroke="#2a2a30" stroke-width="1" opacity="0.7"><polygon points="642.0,228.4 646.3,225.9 706.1,260.4 701.7,262.9"/><polygon points="728.6,278.4 732.9,275.9 803.1,316.4 798.7,318.9"/><polygon points="827.3,335.4 831.6,332.9 901.8,373.4 897.5,375.9"/><polygon points="926.0,392.4 930.4,389.9 1002.2,431.4 997.9,433.9"/><polygon points="1024.8,449.4 1029.1,446.9 1099.2,487.4 1094.9,489.9"/><polygon points="1123.5,506.4 1127.8,503.9 1200.6,545.9 1196.2,548.4"/><polygon points="763.2,159.4 768.4,156.4 827.3,190.4 822.1,193.4"/><polygon points="849.0,208.9 854.2,205.9 901.8,233.4 896.6,236.4"/><polygon points="946.8,265.4 952.0,262.4 1004.0,292.4 998.8,295.4"/><polygon points="1046.4,322.9 1051.6,319.9 1099.2,347.4 1094.0,350.4"/><polygon points="1145.1,379.9 1150.3,376.9 1198.8,404.9 1193.6,407.9"/><polygon points="1243.9,436.9 1249.1,433.9 1296.7,461.4 1291.5,464.4"/></g>
<polygon points="912.0,266.0 939.0,259.0 944.0,297.0 956.0,320.0 970.0,341.0 988.0,362.0 1016.0,382.0 1048.0,397.0 1080.0,414.0 1110.0,434.0 1140.0,449.0 1180.0,464.0 1226.0,475.0 1270.0,483.0 1334.7,483.8 1286.8,533.6 1187.0,502.0 1134.0,462.0 1080.0,432.0 1045.0,412.0 1000.0,386.0 975.0,372.0 961.0,357.0 947.0,335.5 938.0,314.0 912.0,303.0 925.0,285.0" fill="#8aaaf5" fill-opacity="0.5"/>
<path clip-path="url(#cB)" d="M880 -760.0L1420 -490.0M880 -744.0L1420 -474.0M880 -728.0L1420 -458.0M880 -712.0L1420 -442.0M880 -696.0L1420 -426.0M880 -680.0L1420 -410.0M880 -664.0L1420 -394.0M880 -648.0L1420 -378.0M880 -632.0L1420 -362.0M880 -616.0L1420 -346.0M880 -600.0L1420 -330.0M880 -584.0L1420 -314.0M880 -568.0L1420 -298.0M880 -552.0L1420 -282.0M880 -536.0L1420 -266.0M880 -520.0L1420 -250.0M880 -504.0L1420 -234.0M880 -488.0L1420 -218.0M880 -472.0L1420 -202.0M880 -456.0L1420 -186.0M880 -440.0L1420 -170.0M880 -424.0L1420 -154.0M880 -408.0L1420 -138.0M880 -392.0L1420 -122.0M880 -376.0L1420 -106.0M880 -360.0L1420 -90.0M880 -344.0L1420 -74.0M880 -328.0L1420 -58.0M880 -312.0L1420 -42.0M880 -296.0L1420 -26.0M880 -280.0L1420 -10.0M880 -264.0L1420 6.0M880 -248.0L1420 22.0M880 -232.0L1420 38.0M880 -216.0L1420 54.0M880 -200.0L1420 70.0M880 -184.0L1420 86.0M880 -168.0L1420 102.0M880 -152.0L1420 118.0M880 -136.0L1420 134.0M880 -120.0L1420 150.0M880 -104.0L1420 166.0M880 -88.0L1420 182.0M880 -72.0L1420 198.0M880 -56.0L1420 214.0M880 -40.0L1420 230.0M880 -24.0L1420 246.0M880 -8.0L1420 262.0M880 8.0L1420 278.0M880 24.0L1420 294.0M880 40.0L1420 310.0M880 56.0L1420 326.0M880 72.0L1420 342.0M880 88.0L1420 358.0M880 104.0L1420 374.0M880 120.0L1420 390.0M880 136.0L1420 406.0M880 152.0L1420 422.0M880 168.0L1420 438.0M880 184.0L1420 454.0M880 200.0L1420 470.0M880 216.0L1420 486.0M880 232.0L1420 502.0M880 248.0L1420 518.0M880 264.0L1420 534.0M880 280.0L1420 550.0M880 296.0L1420 566.0M880 312.0L1420 582.0M880 328.0L1420 598.0M880 344.0L1420 614.0M880 360.0L1420 630.0M880 376.0L1420 646.0M880 392.0L1420 662.0M880 408.0L1420 678.0M880 424.0L1420 694.0M880 440.0L1420 710.0M880 456.0L1420 726.0M880 472.0L1420 742.0M880 488.0L1420 758.0M880 504.0L1420 774.0M880 520.0L1420 790.0M880 536.0L1420 806.0M880 552.0L1420 822.0M880 568.0L1420 838.0M880 584.0L1420 854.0M880 600.0L1420 870.0M880 616.0L1420 886.0M880 632.0L1420 902.0M880 648.0L1420 918.0M880 664.0L1420 934.0M880 680.0L1420 950.0M880 696.0L1420 966.0M880 712.0L1420 982.0M880 728.0L1420 998.0M880 744.0L1420 1014.0M880 760.0L1420 1030.0M880 776.0L1420 1046.0M880 792.0L1420 1062.0M880 808.0L1420 1078.0M880 824.0L1420 1094.0M880 840.0L1420 1110.0M880 856.0L1420 1126.0M880 872.0L1420 1142.0M880 888.0L1420 1158.0M880 904.0L1420 1174.0M880 920.0L1420 1190.0M880 936.0L1420 1206.0M880 952.0L1420 1222.0M880 968.0L1420 1238.0M880 984.0L1420 1254.0M880 1000.0L1420 1270.0M880 1016.0L1420 1286.0M880 1032.0L1420 1302.0M880 1048.0L1420 1318.0M880 1064.0L1420 1334.0M880 1080.0L1420 1350.0M880 1096.0L1420 1366.0M880 1112.0L1420 1382.0M880 1128.0L1420 1398.0M880 1144.0L1420 1414.0M880 1160.0L1420 1430.0M880 1176.0L1420 1446.0M880 1192.0L1420 1462.0M880 1208.0L1420 1478.0M880 1224.0L1420 1494.0M880 1240.0L1420 1510.0M880 1256.0L1420 1526.0M880 1272.0L1420 1542.0M880 1288.0L1420 1558.0M880 1304.0L1420 1574.0M880 1320.0L1420 1590.0M880 1336.0L1420 1606.0M880 1352.0L1420 1622.0M880 1368.0L1420 1638.0M880 1384.0L1420 1654.0M880 1400.0L1420 1670.0M880 1416.0L1420 1686.0M880 1432.0L1420 1702.0M880 1448.0L1420 1718.0M880 1464.0L1420 1734.0M880 1480.0L1420 1750.0M880 1496.0L1420 1766.0M880 1512.0L1420 1782.0M880 1528.0L1420 1798.0M880 1544.0L1420 1814.0M880 1560.0L1420 1830.0M880 1576.0L1420 1846.0M880 1592.0L1420 1862.0M880 1608.0L1420 1878.0M880 1624.0L1420 1894.0M880 1640.0L1420 1910.0M880 1656.0L1420 1926.0M880 1672.0L1420 1942.0M880 1688.0L1420 1958.0M880 1704.0L1420 1974.0M880 1720.0L1420 1990.0M880 1736.0L1420 2006.0M880 1752.0L1420 2022.0M880 1768.0L1420 2038.0M880 1784.0L1420 2054.0M880 1800.0L1420 2070.0M880 1816.0L1420 2086.0M880 1832.0L1420 2102.0M880 -572.0L1420 -923.0M880 -534.0L1420 -885.0M880 -496.0L1420 -847.0M880 -458.0L1420 -809.0M880 -420.0L1420 -771.0M880 -382.0L1420 -733.0M880 -344.0L1420 -695.0M880 -306.0L1420 -657.0M880 -268.0L1420 -619.0M880 -230.0L1420 -581.0M880 -192.0L1420 -543.0M880 -154.0L1420 -505.0M880 -116.0L1420 -467.0M880 -78.0L1420 -429.0M880 -40.0L1420 -391.0M880 -2.0L1420 -353.0M880 36.0L1420 -315.0M880 74.0L1420 -277.0M880 112.0L1420 -239.0M880 150.0L1420 -201.0M880 188.0L1420 -163.0M880 226.0L1420 -125.0M880 264.0L1420 -87.0M880 302.0L1420 -49.0M880 340.0L1420 -11.0M880 378.0L1420 27.0M880 416.0L1420 65.0M880 454.0L1420 103.0M880 492.0L1420 141.0M880 530.0L1420 179.0M880 568.0L1420 217.0M880 606.0L1420 255.0M880 644.0L1420 293.0M880 682.0L1420 331.0M880 720.0L1420 369.0M880 758.0L1420 407.0M880 796.0L1420 445.0M880 834.0L1420 483.0M880 872.0L1420 521.0M880 910.0L1420 559.0M880 948.0L1420 597.0M880 986.0L1420 635.0M880 1024.0L1420 673.0M880 1062.0L1420 711.0M880 1100.0L1420 749.0M880 1138.0L1420 787.0M880 1176.0L1420 825.0M880 1214.0L1420 863.0M880 1252.0L1420 901.0M880 1290.0L1420 939.0M880 1328.0L1420 977.0M880 1366.0L1420 1015.0M880 1404.0L1420 1053.0M880 1442.0L1420 1091.0M880 1480.0L1420 1129.0M880 1518.0L1420 1167.0M880 1556.0L1420 1205.0M880 1594.0L1420 1243.0M880 1632.0L1420 1281.0M880 1670.0L1420 1319.0M880 1708.0L1420 1357.0M880 1746.0L1420 1395.0M880 1784.0L1420 1433.0M880 1822.0L1420 1471.0" stroke="#3b6fe6" stroke-width="0.9" fill="none" opacity="0.55" stroke-dasharray="5 2"/>
<polygon points="925.0,215.0 1003.0,236.2 1015.0,260.0 1066.3,273.8 1088.5,320.0 1243.0,366.7 1265.0,411.0 1343.0,437.0 1356.0,463.0 1382.0,468.5 1404.4,514.7 1390.5,529.7 1350.6,535.6 1290.0,498.0 1334.6,485.3 950.0,265.0 915.0,268.0 935.0,250.0 939.0,237.0 913.0,229.0" fill="#8aa8f2"/>
<path clip-path="url(#cL1)" d="M880 -36.0L1420 126.0M880 -19.0L1420 143.0M880 -2.0L1420 160.0M880 15.0L1420 177.0M880 32.0L1420 194.0M880 49.0L1420 211.0M880 66.0L1420 228.0M880 83.0L1420 245.0M880 100.0L1420 262.0M880 117.0L1420 279.0M880 134.0L1420 296.0M880 151.0L1420 313.0M880 168.0L1420 330.0M880 185.0L1420 347.0M880 202.0L1420 364.0M880 219.0L1420 381.0M880 236.0L1420 398.0M880 253.0L1420 415.0M880 270.0L1420 432.0M880 287.0L1420 449.0M880 304.0L1420 466.0M880 321.0L1420 483.0M880 338.0L1420 500.0M880 355.0L1420 517.0M880 372.0L1420 534.0M880 389.0L1420 551.0M880 406.0L1420 568.0M880 423.0L1420 585.0M880 440.0L1420 602.0M880 457.0L1420 619.0M880 474.0L1420 636.0M880 491.0L1420 653.0M880 508.0L1420 670.0M880 525.0L1420 687.0M880 542.0L1420 704.0M880 559.0L1420 721.0M880 -880.0L1420 -1420.0M880 -818.0L1420 -1358.0M880 -756.0L1420 -1296.0M880 -694.0L1420 -1234.0M880 -632.0L1420 -1172.0M880 -570.0L1420 -1110.0M880 -508.0L1420 -1048.0M880 -446.0L1420 -986.0M880 -384.0L1420 -924.0M880 -322.0L1420 -862.0M880 -260.0L1420 -800.0M880 -198.0L1420 -738.0M880 -136.0L1420 -676.0M880 -74.0L1420 -614.0M880 -12.0L1420 -552.0M880 50.0L1420 -490.0M880 112.0L1420 -428.0M880 174.0L1420 -366.0M880 236.0L1420 -304.0M880 298.0L1420 -242.0M880 360.0L1420 -180.0M880 422.0L1420 -118.0M880 484.0L1420 -56.0M880 546.0L1420 6.0M880 608.0L1420 68.0M880 670.0L1420 130.0M880 732.0L1420 192.0M880 794.0L1420 254.0M880 856.0L1420 316.0M880 918.0L1420 378.0M880 980.0L1420 440.0M880 1042.0L1420 502.0M880 1104.0L1420 564.0M880 1166.0L1420 626.0M880 1228.0L1420 688.0M880 1290.0L1420 750.0M880 1352.0L1420 812.0M880 1414.0L1420 874.0M880 1476.0L1420 936.0M880 1538.0L1420 998.0M880 1600.0L1420 1060.0M880 1662.0L1420 1122.0M880 -1464.0L1420 -276.0M880 -1398.0L1420 -210.0M880 -1332.0L1420 -144.0M880 -1266.0L1420 -78.0M880 -1200.0L1420 -12.0M880 -1134.0L1420 54.0M880 -1068.0L1420 120.0M880 -1002.0L1420 186.0M880 -936.0L1420 252.0M880 -870.0L1420 318.0M880 -804.0L1420 384.0M880 -738.0L1420 450.0M880 -672.0L1420 516.0M880 -606.0L1420 582.0M880 -540.0L1420 648.0M880 -474.0L1420 714.0M880 -408.0L1420 780.0M880 -342.0L1420 846.0M880 -276.0L1420 912.0M880 -210.0L1420 978.0M880 -144.0L1420 1044.0M880 -78.0L1420 1110.0M880 -12.0L1420 1176.0M880 54.0L1420 1242.0M880 120.0L1420 1308.0M880 186.0L1420 1374.0M880 252.0L1420 1440.0M880 318.0L1420 1506.0M880 384.0L1420 1572.0M880 450.0L1420 1638.0M880 516.0L1420 1704.0M880 582.0L1420 1770.0M880 648.0L1420 1836.0M880 714.0L1420 1902.0M880 780.0L1420 1968.0M880 846.0L1420 2034.0M880 912.0L1420 2100.0M880 978.0L1420 2166.0M880 1044.0L1420 2232.0M880 1110.0L1420 2298.0M880 1176.0L1420 2364.0M880 1242.0L1420 2430.0M880 1308.0L1420 2496.0M880 1374.0L1420 2562.0M880 1440.0L1420 2628.0M880 1506.0L1420 2694.0M880 1572.0L1420 2760.0M880 1638.0L1420 2826.0M880 1704.0L1420 2892.0M880 1770.0L1420 2958.0M880 1836.0L1420 3024.0M880 1902.0L1420 3090.0" stroke="#3a6ee8" stroke-width="1" fill="none" opacity="0.8"/>
<polygon points="1184.6,502.6 1286.9,534.4 1334.5,485.0 1262.0,489.0 1214.0,482.0" fill="#84a2ea" stroke="#111" stroke-width="1" stroke-dasharray="3 1.5"/>
<polygon points="950.0,265.0 1100.0,346.5 1200.0,404.5 1334.6,485.3 1317.0,481.0 1270.0,483.0 1226.0,475.0 1180.0,464.0 1140.0,449.0 1110.0,434.0 1080.0,414.0 1048.0,397.0 1016.0,382.0 988.0,362.0 970.0,341.0 956.0,320.0 944.0,297.0 940.0,268.0" fill="#6b80c9"/>
<path clip-path="url(#cPit)" d="M900 -3.0L1420 168.6M900 17.0L1420 188.6M900 37.0L1420 208.6M900 57.0L1420 228.6M900 77.0L1420 248.6M900 97.0L1420 268.6M900 117.0L1420 288.6M900 137.0L1420 308.6M900 157.0L1420 328.6M900 177.0L1420 348.6M900 197.0L1420 368.6M900 217.0L1420 388.6M900 237.0L1420 408.6M900 257.0L1420 428.6M900 277.0L1420 448.6M900 297.0L1420 468.6M900 317.0L1420 488.6M900 337.0L1420 508.6M900 357.0L1420 528.6M900 377.0L1420 548.6M900 397.0L1420 568.6M900 417.0L1420 588.6M900 437.0L1420 608.6M900 457.0L1420 628.6M900 477.0L1420 648.6M900 497.0L1420 668.6M900 517.0L1420 688.6M900 537.0L1420 708.6M900 557.0L1420 728.6M900 577.0L1420 748.6" stroke="#151515" stroke-width="1.2" fill="none" stroke-dasharray="5 1.5"/>
<path clip-path="url(#cPit)" d="M900 -990.0L1420 -1562.0M900 -932.0L1420 -1504.0M900 -874.0L1420 -1446.0M900 -816.0L1420 -1388.0M900 -758.0L1420 -1330.0M900 -700.0L1420 -1272.0M900 -642.0L1420 -1214.0M900 -584.0L1420 -1156.0M900 -526.0L1420 -1098.0M900 -468.0L1420 -1040.0M900 -410.0L1420 -982.0M900 -352.0L1420 -924.0M900 -294.0L1420 -866.0M900 -236.0L1420 -808.0M900 -178.0L1420 -750.0M900 -120.0L1420 -692.0M900 -62.0L1420 -634.0M900 -4.0L1420 -576.0M900 54.0L1420 -518.0M900 112.0L1420 -460.0M900 170.0L1420 -402.0M900 228.0L1420 -344.0M900 286.0L1420 -286.0M900 344.0L1420 -228.0M900 402.0L1420 -170.0M900 460.0L1420 -112.0M900 518.0L1420 -54.0M900 576.0L1420 4.0M900 634.0L1420 62.0M900 692.0L1420 120.0M900 750.0L1420 178.0M900 808.0L1420 236.0M900 866.0L1420 294.0M900 924.0L1420 352.0M900 982.0L1420 410.0M900 1040.0L1420 468.0M900 1098.0L1420 526.0M900 1156.0L1420 584.0M900 1214.0L1420 642.0M900 1272.0L1420 700.0M900 1330.0L1420 758.0M900 1388.0L1420 816.0M900 1446.0L1420 874.0M900 1504.0L1420 932.0M900 1562.0L1420 990.0M900 1620.0L1420 1048.0M900 1678.0L1420 1106.0M900 1736.0L1420 1164.0M900 1794.0L1420 1222.0" stroke="#151515" stroke-width="1" fill="none" opacity="0.9"/>
<path clip-path="url(#cPit)" d="M900 120.0L1420 16.0M900 164.0L1420 60.0M900 208.0L1420 104.0M900 252.0L1420 148.0M900 296.0L1420 192.0M900 340.0L1420 236.0M900 384.0L1420 280.0M900 428.0L1420 324.0M900 472.0L1420 368.0M900 516.0L1420 412.0M900 560.0L1420 456.0M900 604.0L1420 500.0M900 648.0L1420 544.0M900 692.0L1420 588.0M900 736.0L1420 632.0M900 780.0L1420 676.0M900 824.0L1420 720.0M900 868.0L1420 764.0M900 912.0L1420 808.0M900 956.0L1420 852.0M900 1000.0L1420 896.0" stroke="#151515" stroke-width="1" fill="none" opacity="0.85" stroke-dasharray="6 1.5"/>
<polygon points="950.0,265.0 1100.0,346.5 1200.0,404.5 1334.6,485.3 1334.6,485.3 1312.0,477.7 1290.0,464.5 1262.0,451.7 1240.0,444.5 1210.0,425.5 1170.0,399.1 1140.0,375.7 1110.0,361.3 1080.0,346.6 1040.0,323.9 1000.0,300.2 962.0,275.5 950.0,265.0" fill="#9b7a5e"/>
<polyline points="950.0,265.0 962.0,275.5 1000.0,300.2 1040.0,323.9 1080.0,346.6 1110.0,361.3 1140.0,375.7 1170.0,399.1 1210.0,425.5 1240.0,444.5 1262.0,451.7 1290.0,464.5 1312.0,477.7 1334.6,485.3" fill="none" stroke="#111" stroke-width="1" opacity="0.8"/>
<polyline points="950.0,265.0 1100.0,346.5 1200.0,404.5 1334.6,485.3" fill="none" stroke="#4a5a98" stroke-width="1" opacity="0.7"/>
<g fill="#3a5cb8" opacity="0.85"><rect x="918" y="262" width="2.6" height="12"/><rect x="922" y="258" width="2.6" height="12"/><rect x="926" y="262" width="2.6" height="12"/><rect x="929" y="299" width="2.6" height="12"/><rect x="934" y="304" width="2.6" height="12"/><rect x="938" y="318" width="2.6" height="12"/><rect x="955" y="340" width="2.6" height="12"/><rect x="975" y="356" width="2.6" height="12"/><rect x="1010" y="380" width="2.6" height="12"/><rect x="1048" y="405" width="2.6" height="12"/><rect x="1082" y="428" width="2.6" height="12"/><rect x="1117" y="447" width="2.6" height="12"/><rect x="1160" y="466" width="2.6" height="12"/><rect x="1200" y="478" width="2.6" height="12"/><rect x="1240" y="486" width="2.6" height="12"/><rect x="1290" y="510" width="2.6" height="12"/><rect x="1297" y="507" width="2.6" height="12"/><rect x="1304" y="503" width="2.6" height="12"/><rect x="1311" y="499" width="2.6" height="12"/><rect x="1318" y="496" width="2.6" height="12"/><rect x="1325" y="492" width="2.6" height="12"/><rect x="1332" y="489" width="2.6" height="12"/><rect x="1272" y="516" width="2.6" height="12"/><rect x="1279" y="513" width="2.6" height="12"/><rect x="1265" y="520" width="2.6" height="12"/></g>
<polyline points="902.0,208.8 1003.0,236.2 1015.0,260.0 1066.3,273.8 1088.5,320.0 1243.0,366.7 1265.0,411.0 1343.0,437.0 1356.0,463.0 1382.0,468.5 1404.4,514.7 1390.5,529.7 1350.6,535.6 1337.7,550.6 1336.0,551.0" fill="none" stroke="#2a5ee0" stroke-width="1"/>
<path d="M1003 236.2L1003 258.2M1066.3 273.8L1066.3 295.8M1243 366.7L1243 388.7M1343 437L1343 459M1382 468.5L1382 490.5" stroke="#2a5ee0" stroke-width="1" fill="none" opacity="0.7"/>
</svg><svg width="1418" height="702" style="position:absolute;left:0;top:0">
<rect x="252.5" y="396.5" width="137" height="30" fill="none" stroke="#cf1a1f" stroke-width="3"/>
<line x1="399" y1="416.8" x2="992" y2="452.6" stroke="#d4161c" stroke-width="2.6"/>
<path d="M1006 453.6 L988 446.2 L993 452.8 L987.5 459.6 Z" fill="#d4161c"/>
</svg>

</body></html>
